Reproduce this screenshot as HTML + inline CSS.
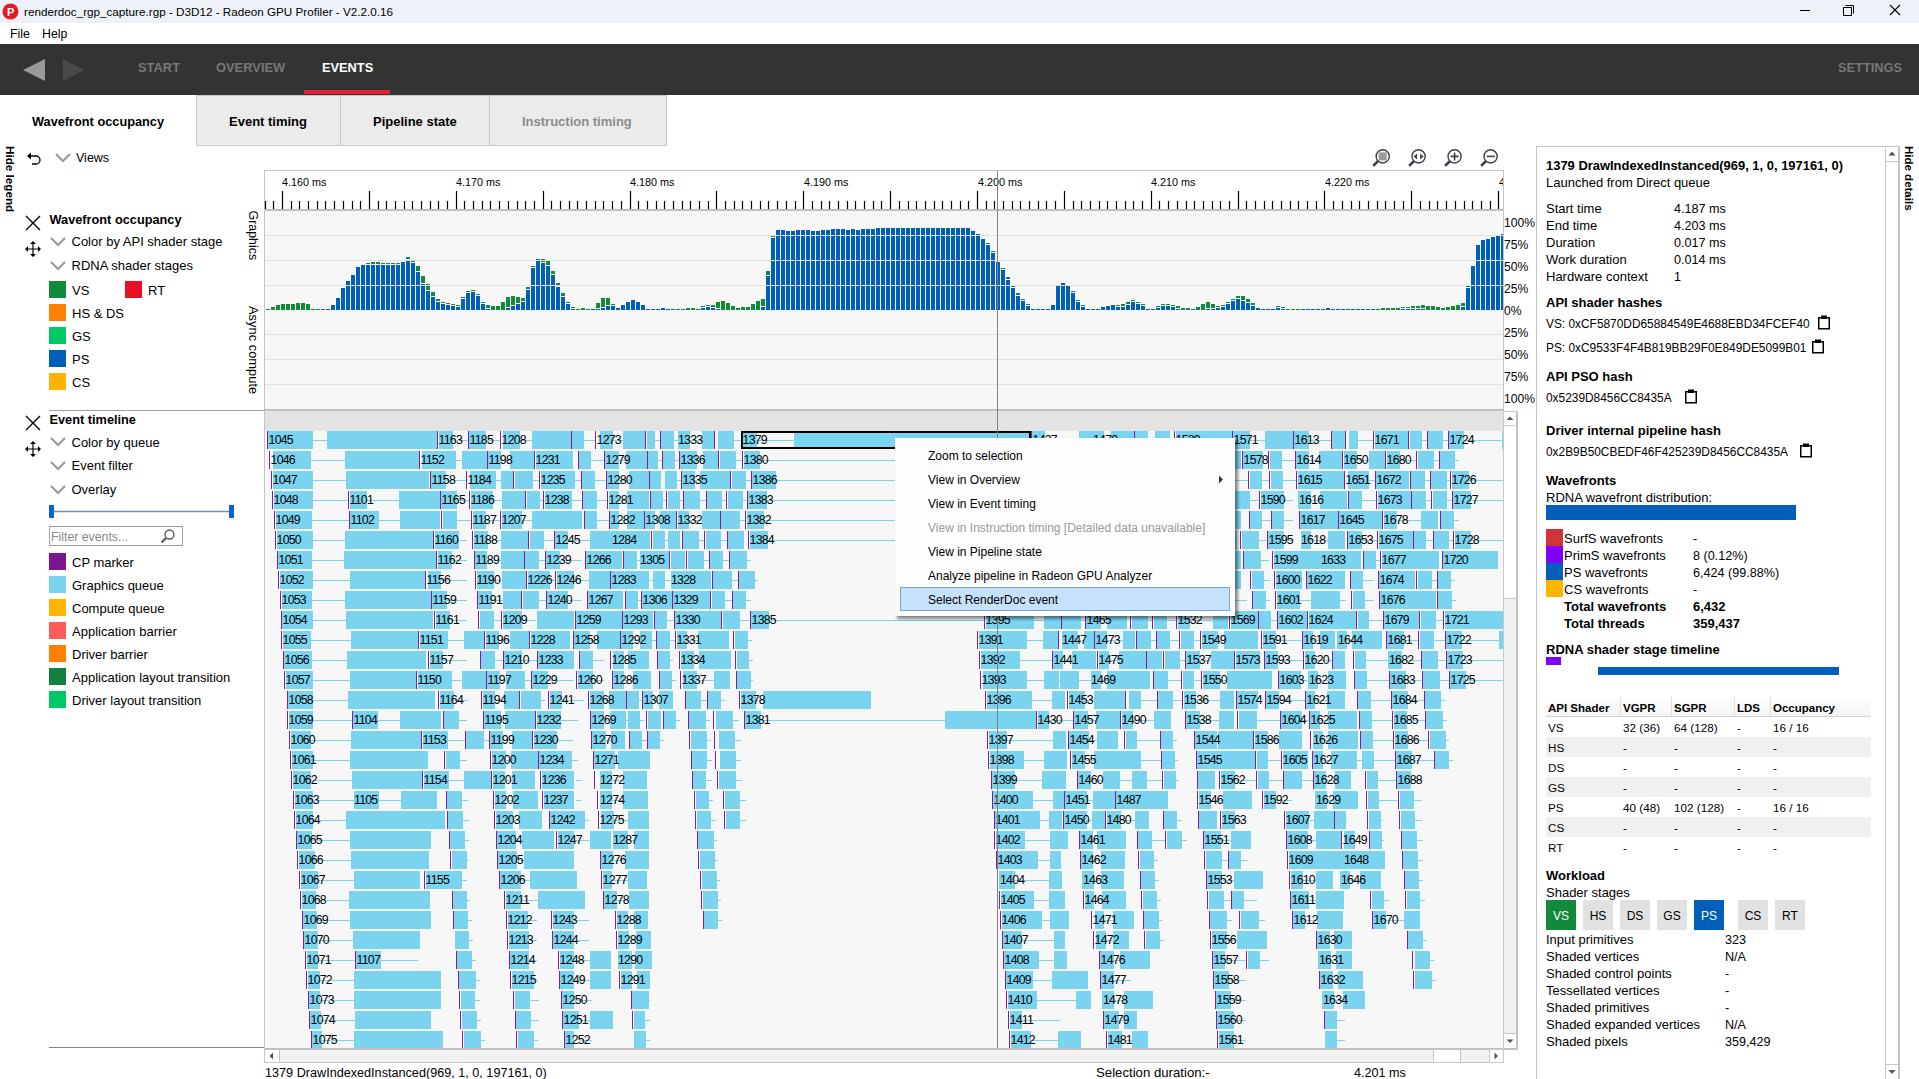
<!DOCTYPE html>
<html><head><meta charset="utf-8"><style>
html,body{margin:0;padding:0;background:#fff;overflow:hidden;width:1919px;height:1079px}
svg{display:block;font-family:"Liberation Sans", sans-serif}
</style></head><body>
<svg width="1919" height="1079" viewBox="0 0 1919 1079">
<rect x="0" y="0" width="1919" height="23" fill="#eef2f8" /><circle cx="10.5" cy="11.5" r="8" fill="#e31b23"/><text x="7" y="16" font-size="11" font-weight="bold" fill="#fff" >P</text><text x="24" y="16" font-size="11.7" font-weight="normal" fill="#000" >renderdoc_rgp_capture.rgp - D3D12 - Radeon GPU Profiler - V2.2.0.16</text><line x1="1800" y1="10.5" x2="1810" y2="10.5" stroke="#000" stroke-width="1" /><rect x="1843.5" y="7.5" width="8" height="8" fill="none" stroke="#000" stroke-width="1"/><path d="M1845.5 5.5 H1853.5 V13.5" fill="none" stroke="#000" stroke-width="1"/><path d="M1890 5 L1900 15 M1900 5 L1890 15" stroke="#000" stroke-width="1.1"/><rect x="0" y="23" width="1919" height="21" fill="#ffffff" /><text x="10" y="38" font-size="12.3" font-weight="normal" fill="#000" >File</text><text x="42" y="38" font-size="12.3" font-weight="normal" fill="#000" >Help</text><rect x="0" y="44" width="1919" height="51" fill="#333333" /><path d="M23 70 L45 59 L45 81 Z" fill="#9a9a9a"/><path d="M63 59 L84 70 L63 81 Z" fill="#4a4a4a"/><text x="138" y="71.5" font-size="12.9" font-weight="bold" fill="#777777" >START</text><text x="216" y="71.5" font-size="12.9" font-weight="bold" fill="#777777" >OVERVIEW</text><text x="322" y="71.5" font-size="12.8" font-weight="bold" fill="#ffffff" >EVENTS</text><text x="1838" y="71.5" font-size="12.8" font-weight="bold" fill="#777777" >SETTINGS</text><rect x="304" y="90" width="86" height="4" fill="#e3223a" /><rect x="196.5" y="95.5" width="470" height="50" fill="#ebebeb" stroke="#c8c8c8" stroke-width="1"/><line x1="340.5" y1="95" x2="340.5" y2="145" stroke="#c8c8c8" stroke-width="1" /><line x1="489.5" y1="95" x2="489.5" y2="145" stroke="#c8c8c8" stroke-width="1" /><text x="32" y="126" font-size="12.75" font-weight="bold" fill="#000" >Wavefront occupancy</text><text x="229" y="126" font-size="13" font-weight="bold" fill="#000" >Event timing</text><text x="373" y="126" font-size="13" font-weight="bold" fill="#000" >Pipeline state</text><text x="522" y="126" font-size="13" font-weight="bold" fill="#8c8c8c" >Instruction timing</text><text transform="translate(5.5,146) rotate(90)" font-size="11.7" font-weight="bold" fill="#000">Hide legend</text><path d="M29 156 H36 A4 4 0 0 1 36 164 H32" fill="none" stroke="#000" stroke-width="1.3"/><path d="M27 156 L31 152.5 V159.5 Z" fill="#000"/><path d="M56 154 L63 161 L70 154" fill="none" stroke="#9a9a9a" stroke-width="2.2"/><text x="76" y="162" font-size="12.5" font-weight="normal" fill="#000" >Views</text><path d="M26 216 L40 230 M40 216 L26 230" stroke="#000" stroke-width="1.4"/><path d="M27 249 H39 M33 243 V255" stroke="#000" stroke-width="1.2"/><path d="M25 249 L28 246 V252 Z M41 249 L38 246 V252 Z M33 241 L30 244 H36 Z M33 257 L30 254 H36 Z" fill="#000"/><text x="49.5" y="224" font-size="12.75" font-weight="bold" fill="#000" >Wavefront occupancy</text><path d="M51 238 L58 245 L65 238" fill="none" stroke="#9a9a9a" stroke-width="2.2"/><text x="71.5" y="246" font-size="13" font-weight="normal" fill="#000" >Color by API shader stage</text><path d="M51 262 L58 269 L65 262" fill="none" stroke="#9a9a9a" stroke-width="2.2"/><text x="71.5" y="270" font-size="13" font-weight="normal" fill="#000" >RDNA shader stages</text><rect x="49" y="281" width="17" height="17" fill="#128a3c" /><text x="72" y="294.5" font-size="13" font-weight="normal" fill="#000" >VS</text><rect x="49" y="304" width="17" height="17" fill="#ff8000" /><text x="72" y="317.5" font-size="13" font-weight="normal" fill="#000" >HS &amp; DS</text><rect x="49" y="327" width="17" height="17" fill="#00c864" /><text x="72" y="340.5" font-size="13" font-weight="normal" fill="#000" >GS</text><rect x="49" y="350" width="17" height="17" fill="#005fb8" /><text x="72" y="363.5" font-size="13" font-weight="normal" fill="#000" >PS</text><rect x="49" y="373" width="17" height="17" fill="#ffb400" /><text x="72" y="386.5" font-size="13" font-weight="normal" fill="#000" >CS</text><rect x="125" y="281" width="17" height="17" fill="#e81123" /><text x="148" y="294.5" font-size="13" font-weight="normal" fill="#000" >RT</text><line x1="49" y1="410.5" x2="265" y2="410.5" stroke="#a0a0a0" stroke-width="1" /><path d="M26 416 L40 430 M40 416 L26 430" stroke="#000" stroke-width="1.4"/><path d="M27 449 H39 M33 443 V455" stroke="#000" stroke-width="1.2"/><path d="M25 449 L28 446 V452 Z M41 449 L38 446 V452 Z M33 441 L30 444 H36 Z M33 457 L30 454 H36 Z" fill="#000"/><text x="49.5" y="424" font-size="12.75" font-weight="bold" fill="#000" >Event timeline</text><path d="M51 438 L58 445 L65 438" fill="none" stroke="#9a9a9a" stroke-width="2.2"/><text x="71.5" y="446.5" font-size="13" font-weight="normal" fill="#000" >Color by queue</text><path d="M51 462 L58 469 L65 462" fill="none" stroke="#9a9a9a" stroke-width="2.2"/><text x="71.5" y="470" font-size="13" font-weight="normal" fill="#000" >Event filter</text><path d="M51 486 L58 493 L65 486" fill="none" stroke="#9a9a9a" stroke-width="2.2"/><text x="71.5" y="494" font-size="13" font-weight="normal" fill="#000" >Overlay</text><line x1="50" y1="511.5" x2="233" y2="511.5" stroke="#6b8fb5" stroke-width="1.5" /><rect x="49" y="505" width="5" height="13" fill="#0a64d2" /><rect x="229" y="505" width="5" height="13" fill="#0a64d2" /><rect x="49.5" y="526.5" width="133" height="19" fill="#fff" stroke="#a0a0a0" stroke-width="1"/><text x="51" y="541" font-size="12.3" font-weight="normal" fill="#8a8a8a" >Filter events...</text><circle cx="169.5" cy="534.5" r="4.5" fill="none" stroke="#555" stroke-width="1.3"/><line x1="166" y1="538" x2="161.5" y2="542.5" stroke="#555" stroke-width="2" /><rect x="49" y="553" width="17" height="17" fill="#7b1690" /><text x="72" y="566.5" font-size="13" font-weight="normal" fill="#000" >CP marker</text><rect x="49" y="576" width="17" height="17" fill="#7ad4f0" /><text x="72" y="589.5" font-size="13" font-weight="normal" fill="#000" >Graphics queue</text><rect x="49" y="599" width="17" height="17" fill="#ffb400" /><text x="72" y="612.5" font-size="13" font-weight="normal" fill="#000" >Compute queue</text><rect x="49" y="622" width="17" height="17" fill="#ff5c5c" /><text x="72" y="635.5" font-size="13" font-weight="normal" fill="#000" >Application barrier</text><rect x="49" y="645" width="17" height="17" fill="#ff8000" /><text x="72" y="658.5" font-size="13" font-weight="normal" fill="#000" >Driver barrier</text><rect x="49" y="668" width="17" height="17" fill="#128040" /><text x="72" y="681.5" font-size="13" font-weight="normal" fill="#000" >Application layout transition</text><rect x="49" y="691" width="17" height="17" fill="#00c864" /><text x="72" y="704.5" font-size="13" font-weight="normal" fill="#000" >Driver layout transition</text><line x1="49" y1="1047.5" x2="265" y2="1047.5" stroke="#808080" stroke-width="1" /><circle cx="1382.7" cy="156.4" r="6.6" fill="#fff" stroke="#3c4048" stroke-width="1.4"/><path d="M1378.1000000000001 161.0 L1373.2 165.9" stroke="#3c4048" stroke-width="2.6"/><rect x="1378.7" y="152.4" width="8" height="8" fill="#9a9a9a"/><circle cx="1418.6" cy="156.4" r="6.6" fill="#fff" stroke="#3c4048" stroke-width="1.4"/><path d="M1414.0 161.0 L1409.1 165.9" stroke="#3c4048" stroke-width="2.6"/><path d="M1413.6 156.4 L1417.1 153.4 V159.4 Z M1423.6 156.4 L1420.1 153.4 V159.4 Z" fill="#3c4048"/><circle cx="1454.6" cy="156.4" r="6.6" fill="#fff" stroke="#3c4048" stroke-width="1.4"/><path d="M1450.0 161.0 L1445.1 165.9" stroke="#3c4048" stroke-width="2.6"/><path d="M1450.6 156.4 H1458.6 M1454.6 152.4 V160.4" stroke="#3c4048" stroke-width="1.6"/><circle cx="1490.6" cy="156.4" r="6.6" fill="#fff" stroke="#3c4048" stroke-width="1.4"/><path d="M1486.0 161.0 L1481.1 165.9" stroke="#3c4048" stroke-width="2.6"/><path d="M1486.6 156.4 H1494.6" stroke="#3c4048" stroke-width="1.6"/><rect x="264" y="170" width="1240" height="40" fill="#ffffff" /><line x1="264" y1="170.5" x2="1504" y2="170.5" stroke="#c4c4c4" stroke-width="1" /><line x1="264.5" y1="170" x2="264.5" y2="1049" stroke="#c4c4c4" stroke-width="1" /><line x1="1503.5" y1="170" x2="1503.5" y2="411" stroke="#c4c4c4" stroke-width="1" /><text x="282" y="186" font-size="10.8" font-weight="normal" fill="#000" >4.160 ms</text><text x="456" y="186" font-size="10.8" font-weight="normal" fill="#000" >4.170 ms</text><text x="630" y="186" font-size="10.8" font-weight="normal" fill="#000" >4.180 ms</text><text x="804" y="186" font-size="10.8" font-weight="normal" fill="#000" >4.190 ms</text><text x="978" y="186" font-size="10.8" font-weight="normal" fill="#000" >4.200 ms</text><text x="1151" y="186" font-size="10.8" font-weight="normal" fill="#000" >4.210 ms</text><text x="1325" y="186" font-size="10.8" font-weight="normal" fill="#000" >4.220 ms</text><svg x="264" y="170" width="1239" height="40" overflow="hidden"><text x="1235" y="16" font-size="10.8" font-weight="normal" fill="#000" >4.230 ms</text></svg><path d="M265.5 201V209M273.5 201V209M282.5 191V209M291.5 201V209M299.5 201V209M308.5 201V209M317.5 201V209M325.5 201V209M334.5 201V209M343.5 201V209M352.5 201V209M360.5 201V209M369.5 191V209M378.5 201V209M386.5 201V209M395.5 201V209M404.5 201V209M412.5 201V209M421.5 201V209M430.5 201V209M438.5 201V209M447.5 201V209M456.5 191V209M464.5 201V209M473.5 201V209M482.5 201V209M490.5 201V209M499.5 201V209M508.5 201V209M517.5 201V209M525.5 201V209M534.5 201V209M543.5 191V209M551.5 201V209M560.5 201V209M569.5 201V209M577.5 201V209M586.5 201V209M595.5 201V209M603.5 201V209M612.5 201V209M621.5 201V209M630.5 191V209M638.5 201V209M647.5 201V209M656.5 201V209M664.5 201V209M673.5 201V209M682.5 201V209M690.5 201V209M699.5 201V209M708.5 201V209M716.5 191V209M725.5 201V209M734.5 201V209M742.5 201V209M751.5 201V209M760.5 201V209M768.5 201V209M777.5 201V209M786.5 201V209M795.5 201V209M803.5 191V209M812.5 201V209M821.5 201V209M829.5 201V209M838.5 201V209M847.5 201V209M855.5 201V209M864.5 201V209M873.5 201V209M881.5 201V209M890.5 191V209M899.5 201V209M908.5 201V209M916.5 201V209M925.5 201V209M934.5 201V209M942.5 201V209M951.5 201V209M960.5 201V209M968.5 201V209M977.5 191V209M986.5 201V209M994.5 201V209M1003.5 201V209M1012.5 201V209M1020.5 201V209M1029.5 201V209M1038.5 201V209M1046.5 201V209M1055.5 201V209M1064.5 191V209M1073.5 201V209M1081.5 201V209M1090.5 201V209M1099.5 201V209M1107.5 201V209M1116.5 201V209M1125.5 201V209M1133.5 201V209M1142.5 201V209M1151.5 191V209M1159.5 201V209M1168.5 201V209M1177.5 201V209M1186.5 201V209M1194.5 201V209M1203.5 201V209M1212.5 201V209M1220.5 201V209M1229.5 201V209M1238.5 191V209M1246.5 201V209M1255.5 201V209M1264.5 201V209M1272.5 201V209M1281.5 201V209M1290.5 201V209M1298.5 201V209M1307.5 201V209M1316.5 201V209M1324.5 191V209M1333.5 201V209M1342.5 201V209M1351.5 201V209M1359.5 201V209M1368.5 201V209M1377.5 201V209M1385.5 201V209M1394.5 201V209M1403.5 201V209M1411.5 191V209M1420.5 201V209M1429.5 201V209M1437.5 201V209M1446.5 201V209M1455.5 201V209M1464.5 201V209M1472.5 201V209M1481.5 201V209M1490.5 201V209M1498.5 191V209" stroke="#000" stroke-width="1.2"/><rect x="265" y="209" width="1238" height="2" fill="#c0c0c0" /><rect x="265" y="211" width="1238" height="198" fill="#f7f7f7" /><path d="M326 309h4v1h-4zM331 305h4v5h-4zM336 298h4v12h-4zM341 288h4v22h-4zM346 281h4v29h-4zM351 275h4v35h-4zM356 267h4v43h-4zM361 265h4v45h-4zM366 265h4v45h-4zM371 265h4v45h-4zM376 265h4v45h-4zM381 265h4v45h-4zM386 265h4v45h-4zM391 265h4v45h-4zM396 265h4v45h-4zM401 262h4v48h-4zM406 260h4v50h-4zM411 263h4v47h-4zM416 272h4v38h-4zM421 284h4v26h-4zM426 291h4v19h-4zM431 297h4v13h-4zM436 302h4v8h-4zM441 304h4v6h-4zM446 305h4v5h-4zM451 306h4v4h-4zM456 307h4v3h-4zM461 299h4v11h-4zM466 293h4v17h-4zM471 292h4v18h-4zM476 296h4v14h-4zM481 304h4v6h-4zM486 309h4v1h-4zM506 308h4v2h-4zM511 306h4v4h-4zM516 304h4v6h-4zM521 302h4v8h-4zM526 290h4v20h-4zM531 268h4v42h-4zM536 261h4v49h-4zM541 263h4v47h-4zM546 266h4v44h-4zM551 275h4v35h-4zM556 287h4v23h-4zM561 297h4v13h-4zM566 304h4v6h-4zM571 309h4v1h-4zM591 309h4v1h-4zM596 309h4v1h-4zM601 308h4v2h-4zM606 306h4v4h-4zM611 306h4v4h-4zM616 308h4v2h-4zM621 305h4v5h-4zM626 302h4v8h-4zM631 300h4v10h-4zM636 302h4v8h-4zM641 305h4v5h-4zM646 309h4v1h-4zM651 309h4v1h-4zM656 309h4v1h-4zM661 308h4v2h-4zM666 309h4v1h-4zM701 308h4v2h-4zM706 307h4v3h-4zM711 308h4v2h-4zM716 309h4v1h-4zM761 307h4v3h-4zM766 276h4v34h-4zM771 238h4v72h-4zM776 230h4v80h-4zM781 230h4v80h-4zM786 231h4v79h-4zM791 231h4v79h-4zM796 230h4v80h-4zM801 230h4v80h-4zM806 230h4v80h-4zM811 231h4v79h-4zM816 231h4v79h-4zM821 230h4v80h-4zM826 230h4v80h-4zM831 229h4v81h-4zM836 229h4v81h-4zM841 229h4v81h-4zM846 230h4v80h-4zM851 229h4v81h-4zM856 230h4v80h-4zM861 229h4v81h-4zM866 229h4v81h-4zM871 229h4v81h-4zM876 228h4v82h-4zM881 228h4v82h-4zM886 228h4v82h-4zM891 228h4v82h-4zM896 228h4v82h-4zM901 228h4v82h-4zM906 228h4v82h-4zM911 228h4v82h-4zM916 228h4v82h-4zM921 228h4v82h-4zM926 228h4v82h-4zM931 228h4v82h-4zM936 228h4v82h-4zM941 228h4v82h-4zM946 228h4v82h-4zM951 228h4v82h-4zM956 228h4v82h-4zM961 228h4v82h-4zM966 228h4v82h-4zM971 231h4v79h-4zM976 234h4v76h-4zM981 239h4v71h-4zM986 245h4v65h-4zM991 253h4v57h-4zM996 262h4v48h-4zM1001 270h4v40h-4zM1006 280h4v30h-4zM1011 288h4v22h-4zM1016 296h4v14h-4zM1021 301h4v9h-4zM1026 306h4v4h-4zM1031 309h4v1h-4zM1036 309h4v1h-4zM1041 309h4v1h-4zM1046 309h4v1h-4zM1051 305h4v5h-4zM1056 286h4v24h-4zM1061 283h4v27h-4zM1066 286h4v24h-4zM1071 293h4v17h-4zM1076 302h4v8h-4zM1081 307h4v3h-4zM1086 309h4v1h-4zM1091 309h4v1h-4zM1096 309h4v1h-4zM1101 307h4v3h-4zM1106 306h4v4h-4zM1111 305h4v5h-4zM1116 307h4v3h-4zM1121 307h4v3h-4zM1126 305h4v5h-4zM1131 302h4v8h-4zM1136 304h4v6h-4zM1141 306h4v4h-4zM1146 309h4v1h-4zM1151 309h4v1h-4zM1156 308h4v2h-4zM1161 306h4v4h-4zM1166 306h4v4h-4zM1171 307h4v3h-4zM1176 309h4v1h-4zM1206 309h4v1h-4zM1211 309h4v1h-4zM1216 308h4v2h-4zM1221 307h4v3h-4zM1226 304h4v6h-4zM1231 301h4v9h-4zM1236 299h4v11h-4zM1241 301h4v9h-4zM1246 303h4v7h-4zM1251 306h4v4h-4zM1256 308h4v2h-4zM1261 309h4v1h-4zM1266 309h4v1h-4zM1271 309h4v1h-4zM1276 308h4v2h-4zM1281 309h4v1h-4zM1301 309h4v1h-4zM1306 309h4v1h-4zM1311 309h4v1h-4zM1316 309h4v1h-4zM1321 309h4v1h-4zM1326 308h4v2h-4zM1331 309h4v1h-4zM1336 309h4v1h-4zM1341 309h4v1h-4zM1346 309h4v1h-4zM1351 309h4v1h-4zM1356 309h4v1h-4zM1361 309h4v1h-4zM1366 309h4v1h-4zM1371 309h4v1h-4zM1401 309h4v1h-4zM1406 309h4v1h-4zM1411 309h4v1h-4zM1416 309h4v1h-4zM1421 309h4v1h-4zM1461 307h4v3h-4zM1466 288h4v22h-4zM1471 266h4v44h-4zM1476 245h4v65h-4zM1481 240h4v70h-4zM1486 239h4v71h-4zM1491 237h4v73h-4zM1496 236h4v74h-4zM1501 234h2v76h-2z" fill="#005fb8"/><path d="M266 309h4v1h-4zM271 307h4v3h-4zM276 305h4v5h-4zM281 304h4v6h-4zM286 304h4v6h-4zM291 304h4v6h-4zM296 303h4v7h-4zM301 303h4v7h-4zM306 304h4v6h-4zM311 309h4v1h-4zM316 309h4v1h-4zM321 309h4v1h-4zM366 263h4v1h-4zM371 262h4v2h-4zM376 262h4v2h-4zM381 263h4v1h-4zM386 263h4v1h-4zM391 263h4v1h-4zM396 263h4v1h-4zM406 257h4v2h-4zM411 261h4v1h-4zM416 266h4v5h-4zM421 276h4v7h-4zM426 284h4v6h-4zM431 292h4v4h-4zM436 299h4v2h-4zM441 302h4v1h-4zM446 303h4v1h-4zM451 304h4v1h-4zM456 305h4v1h-4zM461 297h4v1h-4zM466 291h4v1h-4zM471 290h4v1h-4zM476 294h4v1h-4zM481 302h4v1h-4zM486 305h4v3h-4zM491 306h4v4h-4zM496 306h4v4h-4zM501 302h4v8h-4zM506 297h4v10h-4zM511 296h4v9h-4zM516 297h4v6h-4zM521 298h4v3h-4zM526 287h4v2h-4zM531 266h4v1h-4zM536 259h4v1h-4zM541 259h4v3h-4zM546 261h4v4h-4zM551 271h4v3h-4zM556 283h4v3h-4zM561 293h4v3h-4zM566 302h4v1h-4zM571 307h4v1h-4zM576 309h4v1h-4zM581 308h4v2h-4zM586 309h4v1h-4zM596 303h4v5h-4zM601 298h4v9h-4zM606 298h4v7h-4zM611 304h4v1h-4zM671 309h4v1h-4zM676 309h4v1h-4zM681 309h4v1h-4zM686 308h4v2h-4zM691 308h4v2h-4zM696 309h4v1h-4zM701 306h4v1h-4zM706 305h4v1h-4zM711 305h4v2h-4zM716 302h4v6h-4zM721 301h4v9h-4zM726 303h4v7h-4zM731 306h4v4h-4zM736 308h4v2h-4zM741 307h4v3h-4zM746 307h4v3h-4zM751 304h4v6h-4zM756 301h4v9h-4zM761 299h4v7h-4zM766 271h4v4h-4zM771 236h4v1h-4zM986 243h4v1h-4zM991 251h4v1h-4zM1001 268h4v1h-4zM1006 277h4v2h-4zM1011 286h4v1h-4zM1016 293h4v2h-4zM1021 299h4v1h-4zM1026 304h4v1h-4zM1071 291h4v1h-4zM1076 300h4v1h-4zM1081 305h4v1h-4zM1116 305h4v1h-4zM1121 304h4v2h-4zM1126 302h4v2h-4zM1131 300h4v1h-4zM1136 302h4v1h-4zM1141 304h4v1h-4zM1156 306h4v1h-4zM1161 304h4v1h-4zM1166 304h4v1h-4zM1171 305h4v1h-4zM1176 306h4v2h-4zM1181 308h4v2h-4zM1186 308h4v2h-4zM1191 309h4v1h-4zM1196 307h4v3h-4zM1201 304h4v6h-4zM1206 302h4v6h-4zM1211 304h4v4h-4zM1216 306h4v1h-4zM1221 305h4v1h-4zM1226 302h4v1h-4zM1231 299h4v1h-4zM1236 296h4v2h-4zM1241 296h4v4h-4zM1246 299h4v3h-4zM1251 303h4v2h-4zM1276 306h4v1h-4zM1281 307h4v1h-4zM1286 309h4v1h-4zM1291 309h4v1h-4zM1296 309h4v1h-4zM1376 309h4v1h-4zM1381 308h4v2h-4zM1386 308h4v2h-4zM1391 308h4v2h-4zM1396 308h4v2h-4zM1401 307h4v1h-4zM1406 307h4v1h-4zM1411 306h4v2h-4zM1416 306h4v2h-4zM1421 305h4v3h-4zM1426 306h4v4h-4zM1431 306h4v4h-4zM1436 307h4v3h-4zM1441 308h4v2h-4zM1446 307h4v3h-4zM1451 306h4v4h-4zM1456 305h4v5h-4zM1461 303h4v3h-4zM1466 286h4v1h-4z" fill="#128a3c"/><line x1="265" y1="235.5" x2="1503" y2="235.5" stroke="#e2e2e2" stroke-width="1" /><line x1="265" y1="260.5" x2="1503" y2="260.5" stroke="#e2e2e2" stroke-width="1" /><line x1="265" y1="285.5" x2="1503" y2="285.5" stroke="#e2e2e2" stroke-width="1" /><line x1="265" y1="334.5" x2="1503" y2="334.5" stroke="#e2e2e2" stroke-width="1" /><line x1="265" y1="359.5" x2="1503" y2="359.5" stroke="#e2e2e2" stroke-width="1" /><line x1="265" y1="384.5" x2="1503" y2="384.5" stroke="#e2e2e2" stroke-width="1" /><text x="1504" y="227" font-size="12.1" font-weight="normal" fill="#000" >100%</text><text x="1504" y="249" font-size="12.1" font-weight="normal" fill="#000" >75%</text><text x="1504" y="271" font-size="12.1" font-weight="normal" fill="#000" >50%</text><text x="1504" y="293" font-size="12.1" font-weight="normal" fill="#000" >25%</text><text x="1504" y="315" font-size="12.1" font-weight="normal" fill="#000" >0%</text><text x="1504" y="337" font-size="12.1" font-weight="normal" fill="#000" >25%</text><text x="1504" y="359" font-size="12.1" font-weight="normal" fill="#000" >50%</text><text x="1504" y="381" font-size="12.1" font-weight="normal" fill="#000" >75%</text><text x="1504" y="403" font-size="12.1" font-weight="normal" fill="#000" >100%</text><text transform="translate(248.5,210.5) rotate(90)" font-size="12.4" fill="#000">Graphics</text><text transform="translate(248.5,306) rotate(90)" font-size="12.9" fill="#000">Async compute</text><rect x="265" y="409" width="1238" height="2" fill="#c0c0c0" /><rect x="265" y="411" width="1238" height="637" fill="#f7f7f7" /><rect x="265" y="411" width="1238" height="20" fill="#e3e3e3" /><svg x="265" y="431" width="1238" height="617" viewBox="265 431 1238 617" overflow="hidden"><path d="M313.0 440h14.0v1h-14.0zM453.0 440h15.0v1h-15.0zM486.0 440h14.0v1h-14.0zM520.0 440h12.0v1h-12.0zM584.0 440h11.0v1h-11.0zM613.0 440h10.0v1h-10.0zM655.0 440h5.0v1h-5.0zM674.0 440h4.0v1h-4.0zM690.0 440h12.0v1h-12.0zM734.0 440h8.0v1h-8.0zM757.0 440h37.0v1h-37.0zM1045.0 440h34.0v1h-34.0zM1104.0 440h7.0v1h-7.0zM1148.0 440h7.0v1h-7.0zM1170.0 440h4.0v1h-4.0zM1250.0 440h15.0v1h-15.0zM1309.0 440h22.0v1h-22.0zM1358.0 440h15.0v1h-15.0zM1422.0 440h5.0v1h-5.0zM1443.0 440h5.0v1h-5.0zM1464.0 440h38.0v1h-38.0zM311.0 460h34.0v1h-34.0zM456.0 460h6.0v1h-6.0zM501.0 460h9.0v1h-9.0zM591.0 460h13.0v1h-13.0zM619.0 460h7.0v1h-7.0zM658.0 460h4.0v1h-4.0zM675.0 460h4.0v1h-4.0zM697.0 460h6.0v1h-6.0zM736.0 460h6.0v1h-6.0zM760.0 460h135.0v1h-135.0zM1282.0 460h13.0v1h-13.0zM1309.0 460h10.0v1h-10.0zM1357.0 460h12.0v1h-12.0zM1400.0 460h16.0v1h-16.0zM1434.0 460h5.0v1h-5.0zM1455.0 460h4.0v1h-4.0zM313.0 480h33.0v1h-33.0zM446.0 480h20.0v1h-20.0zM496.0 480h5.0v1h-5.0zM533.0 480h6.0v1h-6.0zM575.0 480h6.0v1h-6.0zM595.0 480h11.0v1h-11.0zM619.0 480h10.0v1h-10.0zM677.0 480h4.0v1h-4.0zM695.0 480h5.0v1h-5.0zM746.0 480h5.0v1h-5.0zM776.0 480h119.0v1h-119.0zM1235.0 480h13.0v1h-13.0zM1262.0 480h7.0v1h-7.0zM1283.0 480h13.0v1h-13.0zM1369.0 480h6.0v1h-6.0zM1425.0 480h5.0v1h-5.0zM1447.0 480h3.0v1h-3.0zM1469.0 480h34.0v1h-34.0zM313.0 500h36.0v1h-36.0zM367.0 500h32.0v1h-32.0zM457.0 500h12.0v1h-12.0zM493.0 500h9.0v1h-9.0zM540.0 500h3.0v1h-3.0zM572.0 500h10.0v1h-10.0zM597.0 500h10.0v1h-10.0zM619.0 500h8.0v1h-8.0zM663.0 500h3.0v1h-3.0zM680.0 500h3.0v1h-3.0zM700.0 500h6.0v1h-6.0zM722.0 500h4.0v1h-4.0zM743.0 500h4.0v1h-4.0zM767.0 500h128.0v1h-128.0zM1250.0 500h9.0v1h-9.0zM1284.0 500h9.0v1h-9.0zM1311.0 500h9.0v1h-9.0zM1362.0 500h14.0v1h-14.0zM1426.0 500h5.0v1h-5.0zM1447.0 500h5.0v1h-5.0zM1471.0 500h32.0v1h-32.0zM312.0 520h37.0v1h-37.0zM379.0 520h21.0v1h-21.0zM457.0 520h15.0v1h-15.0zM486.0 520h14.0v1h-14.0zM522.0 520h10.0v1h-10.0zM597.0 520h12.0v1h-12.0zM619.0 520h8.0v1h-8.0zM655.0 520h5.0v1h-5.0zM689.0 520h13.0v1h-13.0zM740.0 520h5.0v1h-5.0zM764.0 520h131.0v1h-131.0zM1262.0 520h9.0v1h-9.0zM1284.0 520h9.0v1h-9.0zM1397.0 520h24.0v1h-24.0zM1454.0 520h5.0v1h-5.0zM313.0 540h32.0v1h-32.0zM459.0 540h8.0v1h-8.0zM488.0 540h13.0v1h-13.0zM544.0 540h10.0v1h-10.0zM568.0 540h22.0v1h-22.0zM665.0 540h3.0v1h-3.0zM699.0 540h5.0v1h-5.0zM721.0 540h6.0v1h-6.0zM768.0 540h127.0v1h-127.0zM1259.0 540h8.0v1h-8.0zM1284.0 540h9.0v1h-9.0zM1311.0 540h17.0v1h-17.0zM1362.0 540h15.0v1h-15.0zM1426.0 540h7.0v1h-7.0zM1449.0 540h4.0v1h-4.0zM1471.0 540h32.0v1h-32.0zM312.0 560h32.0v1h-32.0zM452.0 560h15.0v1h-15.0zM487.0 560h14.0v1h-14.0zM539.0 560h6.0v1h-6.0zM560.0 560h11.0v1h-11.0zM571.0 560h11.0v1h-11.0zM637.0 560h3.0v1h-3.0zM704.0 560h5.0v1h-5.0zM723.0 560h6.0v1h-6.0zM747.0 560h4.0v1h-4.0zM1261.0 560h8.0v1h-8.0zM1376.0 560h4.0v1h-4.0zM313.0 580h37.0v1h-37.0zM441.0 580h26.0v1h-26.0zM494.0 580h8.0v1h-8.0zM550.0 580h5.0v1h-5.0zM574.0 580h15.0v1h-15.0zM649.0 580h4.0v1h-4.0zM665.0 580h6.0v1h-6.0zM732.0 580h6.0v1h-6.0zM755.0 580h3.0v1h-3.0zM1264.0 580h6.0v1h-6.0zM1363.0 580h11.0v1h-11.0zM1432.0 580h5.0v1h-5.0zM1451.0 580h4.0v1h-4.0zM312.0 600h33.0v1h-33.0zM447.0 600h20.0v1h-20.0zM492.0 600h11.0v1h-11.0zM539.0 600h7.0v1h-7.0zM568.0 600h6.0v1h-6.0zM571.0 600h11.0v1h-11.0zM638.0 600h3.0v1h-3.0zM725.0 600h7.0v1h-7.0zM746.0 600h5.0v1h-5.0zM1235.0 600h12.0v1h-12.0zM1266.0 600h4.0v1h-4.0zM1300.0 600h11.0v1h-11.0zM1340.0 600h6.0v1h-6.0zM1365.0 600h9.0v1h-9.0zM1452.0 600h4.0v1h-4.0zM313.0 620h33.0v1h-33.0zM450.0 620h17.0v1h-17.0zM494.0 620h7.0v1h-7.0zM522.0 620h14.0v1h-14.0zM667.0 620h7.0v1h-7.0zM740.0 620h10.0v1h-10.0zM769.0 620h126.0v1h-126.0zM895.0 620h89.0v1h-89.0zM1034.0 620h10.0v1h-10.0zM1081.0 620h4.0v1h-4.0zM1101.0 620h6.0v1h-6.0zM1148.0 620h4.0v1h-4.0zM1167.0 620h9.0v1h-9.0zM1190.0 620h23.0v1h-23.0zM1271.0 620h6.0v1h-6.0zM1369.0 620h14.0v1h-14.0zM1436.0 620h7.0v1h-7.0zM311.0 640h40.0v1h-40.0zM448.0 640h16.0v1h-16.0zM499.0 640h11.0v1h-11.0zM590.0 640h7.0v1h-7.0zM633.0 640h7.0v1h-7.0zM652.0 640h4.0v1h-4.0zM670.0 640h5.0v1h-5.0zM687.0 640h11.0v1h-11.0zM748.0 640h4.0v1h-4.0zM1027.0 640h16.0v1h-16.0zM1078.0 640h6.0v1h-6.0zM1107.0 640h16.0v1h-16.0zM1151.0 640h5.0v1h-5.0zM1170.0 640h9.0v1h-9.0zM1193.0 640h7.0v1h-7.0zM1218.0 640h6.0v1h-6.0zM1276.0 640h26.0v1h-26.0zM1313.0 640h7.0v1h-7.0zM1347.0 640h5.0v1h-5.0zM1404.0 640h14.0v1h-14.0zM1434.0 640h11.0v1h-11.0zM1462.0 640h37.0v1h-37.0zM312.0 660h35.0v1h-35.0zM443.0 660h24.0v1h-24.0zM495.0 660h8.0v1h-8.0zM522.0 660h15.0v1h-15.0zM593.0 660h11.0v1h-11.0zM624.0 660h4.0v1h-4.0zM670.0 660h3.0v1h-3.0zM694.0 660h5.0v1h-5.0zM749.0 660h4.0v1h-4.0zM1020.0 660h32.0v1h-32.0zM1063.0 660h9.0v1h-9.0zM1109.0 660h10.0v1h-10.0zM1180.0 660h14.0v1h-14.0zM1200.0 660h11.0v1h-11.0zM1278.0 660h25.0v1h-25.0zM1315.0 660h17.0v1h-17.0zM1366.0 660h22.0v1h-22.0zM1402.0 660h19.0v1h-19.0zM1438.0 660h8.0v1h-8.0zM1463.0 660h40.0v1h-40.0zM313.0 680h37.0v1h-37.0zM452.0 680h10.0v1h-10.0zM500.0 680h6.0v1h-6.0zM525.0 680h6.0v1h-6.0zM548.0 680h26.0v1h-26.0zM593.0 680h11.0v1h-11.0zM624.0 680h9.0v1h-9.0zM672.0 680h4.0v1h-4.0zM697.0 680h17.0v1h-17.0zM751.0 680h2.0v1h-2.0zM1027.0 680h17.0v1h-17.0zM1059.0 680h1.0v1h-1.0zM1079.0 680h12.0v1h-12.0zM1101.0 680h6.0v1h-6.0zM1168.0 680h13.0v1h-13.0zM1194.0 680h7.0v1h-7.0zM1220.0 680h7.0v1h-7.0zM1301.0 680h7.0v1h-7.0zM1318.0 680h10.0v1h-10.0zM1367.0 680h22.0v1h-22.0zM1406.0 680h16.0v1h-16.0zM1440.0 680h9.0v1h-9.0zM1466.0 680h37.0v1h-37.0zM313.0 700h35.0v1h-35.0zM454.0 700h14.0v1h-14.0zM495.0 700h9.0v1h-9.0zM541.0 700h4.0v1h-4.0zM562.0 700h12.0v1h-12.0zM574.0 700h10.0v1h-10.0zM604.0 700h5.0v1h-5.0zM639.0 700h3.0v1h-3.0zM653.0 700h6.0v1h-6.0zM701.0 700h6.0v1h-6.0zM721.0 700h4.0v1h-4.0zM756.0 700h7.0v1h-7.0zM1032.0 700h20.0v1h-20.0zM1085.0 700h9.0v1h-9.0zM1141.0 700h16.0v1h-16.0zM1173.0 700h9.0v1h-9.0zM1196.0 700h24.0v1h-24.0zM1279.0 700h26.0v1h-26.0zM1315.0 700h12.0v1h-12.0zM1371.0 700h20.0v1h-20.0zM1408.0 700h16.0v1h-16.0zM1441.0 700h4.0v1h-4.0zM313.0 720h39.0v1h-39.0zM378.0 720h22.0v1h-22.0zM459.0 720h8.0v1h-8.0zM501.0 720h4.0v1h-4.0zM561.0 720h13.0v1h-13.0zM574.0 720h4.0v1h-4.0zM604.0 720h6.0v1h-6.0zM626.0 720h2.0v1h-2.0zM640.0 720h4.0v1h-4.0zM676.0 720h4.0v1h-4.0zM706.0 720h4.0v1h-4.0zM733.0 720h6.0v1h-6.0zM761.0 720h134.0v1h-134.0zM895.0 720h50.0v1h-50.0zM1049.0 720h24.0v1h-24.0zM1088.0 720h8.0v1h-8.0zM1133.0 720h21.0v1h-21.0zM1200.0 720h19.0v1h-19.0zM1257.0 720h23.0v1h-23.0zM1302.0 720h7.0v1h-7.0zM1320.0 720h8.0v1h-8.0zM1372.0 720h20.0v1h-20.0zM1407.0 720h18.0v1h-18.0zM1443.0 720h4.0v1h-4.0zM311.0 740h40.0v1h-40.0zM448.0 740h17.0v1h-17.0zM484.0 740h5.0v1h-5.0zM503.0 740h9.0v1h-9.0zM557.0 740h17.0v1h-17.0zM574.0 740h-1.0v1h1.0zM606.0 740h5.0v1h-5.0zM642.0 740h5.0v1h-5.0zM660.0 740h4.0v1h-4.0zM707.0 740h4.0v1h-4.0zM735.0 740h6.0v1h-6.0zM1007.0 740h46.0v1h-46.0zM1089.0 740h8.0v1h-8.0zM1137.0 740h23.0v1h-23.0zM1173.0 740h4.0v1h-4.0zM1217.0 740h1.0v1h-1.0zM1268.0 740h11.0v1h-11.0zM1323.0 740h5.0v1h-5.0zM1373.0 740h20.0v1h-20.0zM1408.0 740h20.0v1h-20.0zM1446.0 740h3.0v1h-3.0zM313.0 760h37.0v1h-37.0zM460.0 760h7.0v1h-7.0zM506.0 760h5.0v1h-5.0zM572.0 760h6.0v1h-6.0zM615.0 760h3.0v1h-3.0zM707.0 760h5.0v1h-5.0zM736.0 760h5.0v1h-5.0zM1024.0 760h20.0v1h-20.0zM1085.0 760h9.0v1h-9.0zM1141.0 760h20.0v1h-20.0zM1175.0 760h3.0v1h-3.0zM1268.0 760h13.0v1h-13.0zM1323.0 760h8.0v1h-8.0zM1357.0 760h5.0v1h-5.0zM1374.0 760h21.0v1h-21.0zM1412.0 760h22.0v1h-22.0zM1449.0 760h4.0v1h-4.0zM311.0 780h41.0v1h-41.0zM449.0 780h15.0v1h-15.0zM505.0 780h7.0v1h-7.0zM576.0 780h6.0v1h-6.0zM612.0 780h11.0v1h-11.0zM706.0 780h6.0v1h-6.0zM736.0 780h6.0v1h-6.0zM1015.0 780h27.0v1h-27.0zM1091.0 780h12.0v1h-12.0zM1120.0 780h12.0v1h-12.0zM1147.0 780h15.0v1h-15.0zM1176.0 780h3.0v1h-3.0zM1235.0 780h21.0v1h-21.0zM1269.0 780h14.0v1h-14.0zM1302.0 780h11.0v1h-11.0zM1326.0 780h9.0v1h-9.0zM1378.0 780h18.0v1h-18.0zM1411.0 780h11.0v1h-11.0zM313.0 800h41.0v1h-41.0zM379.0 800h22.0v1h-22.0zM462.0 800h6.0v1h-6.0zM506.0 800h7.0v1h-7.0zM576.0 800h6.0v1h-6.0zM612.0 800h11.0v1h-11.0zM709.0 800h4.0v1h-4.0zM740.0 800h6.0v1h-6.0zM1033.0 800h20.0v1h-20.0zM1087.0 800h6.0v1h-6.0zM1211.0 800h12.0v1h-12.0zM1276.0 800h16.0v1h-16.0zM1327.0 800h6.0v1h-6.0zM1379.0 800h19.0v1h-19.0zM1414.0 800h8.0v1h-8.0zM313.0 820h33.0v1h-33.0zM463.0 820h6.0v1h-6.0zM513.0 820h6.0v1h-6.0zM585.0 820h4.0v1h-4.0zM614.0 820h14.0v1h-14.0zM711.0 820h5.0v1h-5.0zM740.0 820h6.0v1h-6.0zM1040.0 820h9.0v1h-9.0zM1087.0 820h5.0v1h-5.0zM1121.0 820h14.0v1h-14.0zM1177.0 820h5.0v1h-5.0zM1235.0 820h12.0v1h-12.0zM1309.0 820h5.0v1h-5.0zM1346.0 820h1.0v1h-1.0zM1381.0 820h2.0v1h-2.0zM1415.0 820h7.0v1h-7.0zM312.0 840h38.0v1h-38.0zM465.0 840h4.0v1h-4.0zM516.0 840h6.0v1h-6.0zM570.0 840h20.0v1h-20.0zM628.0 840h6.0v1h-6.0zM714.0 840h3.0v1h-3.0zM1025.0 840h25.0v1h-25.0zM1093.0 840h4.0v1h-4.0zM1152.0 840h13.0v1h-13.0zM1182.0 840h5.0v1h-5.0zM1221.0 840h10.0v1h-10.0zM1308.0 840h8.0v1h-8.0zM1382.0 840h2.0v1h-2.0zM1417.0 840h6.0v1h-6.0zM315.0 860h36.0v1h-36.0zM467.0 860h2.0v1h-2.0zM517.0 860h7.0v1h-7.0zM613.0 860h12.0v1h-12.0zM715.0 860h3.0v1h-3.0zM1038.0 860h12.0v1h-12.0zM1093.0 860h8.0v1h-8.0zM1154.0 860h4.0v1h-4.0zM1222.0 860h6.0v1h-6.0zM1241.0 860h7.0v1h-7.0zM1418.0 860h5.0v1h-5.0zM318.0 880h36.0v1h-36.0zM462.0 880h5.0v1h-5.0zM521.0 880h9.0v1h-9.0zM612.0 880h16.0v1h-16.0zM717.0 880h3.0v1h-3.0zM1015.0 880h34.0v1h-34.0zM1094.0 880h7.0v1h-7.0zM1155.0 880h4.0v1h-4.0zM1222.0 880h12.0v1h-12.0zM1303.0 880h13.0v1h-13.0zM1350.0 880h10.0v1h-10.0zM1419.0 880h4.0v1h-4.0zM316.0 900h33.0v1h-33.0zM467.0 900h3.0v1h-3.0zM521.0 900h17.0v1h-17.0zM617.0 900h12.0v1h-12.0zM718.0 900h3.0v1h-3.0zM1034.0 900h15.0v1h-15.0zM1094.0 900h8.0v1h-8.0zM1157.0 900h4.0v1h-4.0zM1224.0 900h7.0v1h-7.0zM1244.0 900h13.0v1h-13.0zM1309.0 900h7.0v1h-7.0zM1384.0 900h5.0v1h-5.0zM1420.0 900h5.0v1h-5.0zM317.0 920h33.0v1h-33.0zM468.0 920h4.0v1h-4.0zM528.0 920h9.0v1h-9.0zM572.0 920h17.0v1h-17.0zM628.0 920h6.0v1h-6.0zM718.0 920h4.0v1h-4.0zM1042.0 920h8.0v1h-8.0zM1104.0 920h9.0v1h-9.0zM1159.0 920h3.0v1h-3.0zM1227.0 920h5.0v1h-5.0zM1259.0 920h6.0v1h-6.0zM1305.0 920h12.0v1h-12.0zM1386.0 920h18.0v1h-18.0zM318.0 940h35.0v1h-35.0zM469.0 940h4.0v1h-4.0zM529.0 940h8.0v1h-8.0zM575.0 940h14.0v1h-14.0zM629.0 940h7.0v1h-7.0zM1022.0 940h32.0v1h-32.0zM1106.0 940h7.0v1h-7.0zM1160.0 940h4.0v1h-4.0zM1227.0 940h10.0v1h-10.0zM1330.0 940h4.0v1h-4.0zM1423.0 940h4.0v1h-4.0zM318.0 960h37.0v1h-37.0zM381.0 960h37.0v1h-37.0zM472.0 960h4.0v1h-4.0zM529.0 960h8.0v1h-8.0zM573.0 960h17.0v1h-17.0zM632.0 960h3.0v1h-3.0zM1039.0 960h15.0v1h-15.0zM1114.0 960h6.0v1h-6.0zM1225.0 960h21.0v1h-21.0zM1260.0 960h9.0v1h-9.0zM1331.0 960h5.0v1h-5.0zM1430.0 960h4.0v1h-4.0zM320.0 980h34.0v1h-34.0zM476.0 980h4.0v1h-4.0zM534.0 980h4.0v1h-4.0zM574.0 980h16.0v1h-16.0zM632.0 980h5.0v1h-5.0zM1033.0 980h19.0v1h-19.0zM1114.0 980h17.0v1h-17.0zM1229.0 980h17.0v1h-17.0zM1333.0 980h5.0v1h-5.0zM1432.0 980h4.0v1h-4.0zM320.0 1000h34.0v1h-34.0zM475.0 1000h5.0v1h-5.0zM530.0 1000h9.0v1h-9.0zM574.0 1000h18.0v1h-18.0zM649.0 1000h1.0v1h-1.0zM1037.0 1000h39.0v1h-39.0zM1114.0 1000h10.0v1h-10.0zM1231.0 1000h15.0v1h-15.0zM1334.0 1000h9.0v1h-9.0zM321.0 1020h34.0v1h-34.0zM477.0 1020h4.0v1h-4.0zM531.0 1020h8.0v1h-8.0zM579.0 1020h11.0v1h-11.0zM645.0 1020h5.0v1h-5.0zM1022.0 1020h38.0v1h-38.0zM1119.0 1020h5.0v1h-5.0zM1234.0 1020h12.0v1h-12.0zM1337.0 1020h8.0v1h-8.0zM322.0 1040h32.0v1h-32.0zM481.0 1040h4.0v1h-4.0zM534.0 1040h4.0v1h-4.0zM580.0 1040h12.0v1h-12.0zM646.0 1040h4.0v1h-4.0zM1031.0 1040h27.0v1h-27.0zM1122.0 1040h10.0v1h-10.0zM1234.0 1040h12.0v1h-12.0zM1337.0 1040h8.0v1h-8.0z" fill="#7ad4f0"/><path d="M268.0 431h45.0v18h-45.0zM327.0 431h110.0v18h-110.0zM439.0 431h14.0v18h-14.0zM469.0 431h17.0v18h-17.0zM503.0 431h17.0v18h-17.0zM532.0 431h39.0v18h-39.0zM572.0 431h12.0v18h-12.0zM600.0 431h13.0v18h-13.0zM623.0 431h22.0v18h-22.0zM647.0 431h8.0v18h-8.0zM661.0 431h13.0v18h-13.0zM678.0 431h12.0v18h-12.0zM702.0 431h12.0v18h-12.0zM718.0 431h16.0v18h-16.0zM743.0 431h14.0v18h-14.0zM794.0 431h235.0v18h-235.0zM1032.0 431h13.0v18h-13.0zM1079.0 431h25.0v18h-25.0zM1111.0 431h23.0v18h-23.0zM1135.0 431h13.0v18h-13.0zM1155.0 431h15.0v18h-15.0zM1176.0 431h56.0v18h-56.0zM1233.0 431h17.0v18h-17.0zM1265.0 431h28.0v18h-28.0zM1294.0 431h15.0v18h-15.0zM1332.0 431h13.0v18h-13.0zM1349.0 431h9.0v18h-9.0zM1375.0 431h33.0v18h-33.0zM1410.0 431h12.0v18h-12.0zM1428.0 431h15.0v18h-15.0zM1449.0 431h15.0v18h-15.0zM1502.0 431h1.0v18h-1.0zM273.0 451h38.0v18h-38.0zM345.0 451h74.0v18h-74.0zM422.0 451h34.0v18h-34.0zM462.0 451h25.0v18h-25.0zM488.0 451h13.0v18h-13.0zM510.0 451h24.0v18h-24.0zM536.0 451h38.0v18h-38.0zM574.0 451h-1.0v18h1.0zM579.0 451h12.0v18h-12.0zM605.0 451h14.0v18h-14.0zM626.0 451h21.0v18h-21.0zM648.0 451h10.0v18h-10.0zM663.0 451h12.0v18h-12.0zM680.0 451h17.0v18h-17.0zM703.0 451h15.0v18h-15.0zM720.0 451h16.0v18h-16.0zM744.0 451h16.0v18h-16.0zM1235.0 451h6.0v18h-6.0zM1243.0 451h20.0v18h-20.0zM1270.0 451h12.0v18h-12.0zM1296.0 451h13.0v18h-13.0zM1319.0 451h23.0v18h-23.0zM1344.0 451h13.0v18h-13.0zM1369.0 451h16.0v18h-16.0zM1387.0 451h13.0v18h-13.0zM1418.0 451h16.0v18h-16.0zM1440.0 451h15.0v18h-15.0zM273.0 471h40.0v18h-40.0zM346.0 471h83.0v18h-83.0zM431.0 471h15.0v18h-15.0zM470.0 471h26.0v18h-26.0zM501.0 471h12.0v18h-12.0zM515.0 471h18.0v18h-18.0zM541.0 471h33.0v18h-33.0zM572.0 471h3.0v18h-3.0zM582.0 471h13.0v18h-13.0zM607.0 471h12.0v18h-12.0zM629.0 471h32.0v18h-32.0zM665.0 471h12.0v18h-12.0zM682.0 471h13.0v18h-13.0zM700.0 471h30.0v18h-30.0zM732.0 471h14.0v18h-14.0zM752.0 471h24.0v18h-24.0zM1250.0 471h12.0v18h-12.0zM1271.0 471h12.0v18h-12.0zM1298.0 471h46.0v18h-46.0zM1348.0 471h21.0v18h-21.0zM1376.0 471h33.0v18h-33.0zM1411.0 471h14.0v18h-14.0zM1431.0 471h16.0v18h-16.0zM1452.0 471h17.0v18h-17.0zM274.0 491h39.0v18h-39.0zM350.0 491h17.0v18h-17.0zM399.0 491h41.0v18h-41.0zM441.0 491h16.0v18h-16.0zM471.0 491h22.0v18h-22.0zM502.0 491h23.0v18h-23.0zM527.0 491h13.0v18h-13.0zM545.0 491h27.0v18h-27.0zM572.0 491h0.0v18h0.0zM583.0 491h14.0v18h-14.0zM609.0 491h10.0v18h-10.0zM627.0 491h22.0v18h-22.0zM651.0 491h12.0v18h-12.0zM668.0 491h12.0v18h-12.0zM684.0 491h16.0v18h-16.0zM707.0 491h15.0v18h-15.0zM728.0 491h15.0v18h-15.0zM748.0 491h19.0v18h-19.0zM1235.0 491h15.0v18h-15.0zM1261.0 491h23.0v18h-23.0zM1298.0 491h13.0v18h-13.0zM1320.0 491h27.0v18h-27.0zM1349.0 491h13.0v18h-13.0zM1378.0 491h33.0v18h-33.0zM1412.0 491h14.0v18h-14.0zM1433.0 491h14.0v18h-14.0zM1453.0 491h18.0v18h-18.0zM276.0 511h36.0v18h-36.0zM350.0 511h29.0v18h-29.0zM400.0 511h40.0v18h-40.0zM443.0 511h14.0v18h-14.0zM473.0 511h13.0v18h-13.0zM502.0 511h20.0v18h-20.0zM532.0 511h42.0v18h-42.0zM574.0 511h8.0v18h-8.0zM585.0 511h12.0v18h-12.0zM610.0 511h9.0v18h-9.0zM627.0 511h17.0v18h-17.0zM645.0 511h10.0v18h-10.0zM660.0 511h16.0v18h-16.0zM678.0 511h11.0v18h-11.0zM702.0 511h18.0v18h-18.0zM721.0 511h19.0v18h-19.0zM747.0 511h17.0v18h-17.0zM1235.0 511h6.0v18h-6.0zM1250.0 511h12.0v18h-12.0zM1272.0 511h12.0v18h-12.0zM1300.0 511h38.0v18h-38.0zM1339.0 511h43.0v18h-43.0zM1384.0 511h13.0v18h-13.0zM1421.0 511h17.0v18h-17.0zM1441.0 511h13.0v18h-13.0zM277.0 531h36.0v18h-36.0zM345.0 531h88.0v18h-88.0zM435.0 531h24.0v18h-24.0zM474.0 531h14.0v18h-14.0zM501.0 531h27.0v18h-27.0zM530.0 531h14.0v18h-14.0zM555.0 531h13.0v18h-13.0zM590.0 531h60.0v18h-60.0zM653.0 531h12.0v18h-12.0zM668.0 531h12.0v18h-12.0zM682.0 531h17.0v18h-17.0zM706.0 531h15.0v18h-15.0zM728.0 531h16.0v18h-16.0zM750.0 531h18.0v18h-18.0zM1235.0 531h2.0v18h-2.0zM1242.0 531h17.0v18h-17.0zM1268.0 531h16.0v18h-16.0zM1301.0 531h10.0v18h-10.0zM1328.0 531h17.0v18h-17.0zM1348.0 531h14.0v18h-14.0zM1379.0 531h34.0v18h-34.0zM1414.0 531h12.0v18h-12.0zM1434.0 531h15.0v18h-15.0zM1455.0 531h16.0v18h-16.0zM278.0 551h34.0v18h-34.0zM344.0 551h92.0v18h-92.0zM438.0 551h14.0v18h-14.0zM475.0 551h12.0v18h-12.0zM501.0 551h23.0v18h-23.0zM525.0 551h14.0v18h-14.0zM546.0 551h14.0v18h-14.0zM586.0 551h36.0v18h-36.0zM624.0 551h13.0v18h-13.0zM640.0 551h29.0v18h-29.0zM671.0 551h14.0v18h-14.0zM688.0 551h16.0v18h-16.0zM710.0 551h13.0v18h-13.0zM730.0 551h17.0v18h-17.0zM1235.0 551h6.0v18h-6.0zM1244.0 551h17.0v18h-17.0zM1274.0 551h87.0v18h-87.0zM1364.0 551h12.0v18h-12.0zM1382.0 551h57.0v18h-57.0zM1443.0 551h55.0v18h-55.0zM280.0 571h33.0v18h-33.0zM350.0 571h75.0v18h-75.0zM428.0 571h13.0v18h-13.0zM477.0 571h17.0v18h-17.0zM502.0 571h24.0v18h-24.0zM528.0 571h22.0v18h-22.0zM557.0 571h17.0v18h-17.0zM574.0 571h0.0v18h0.0zM589.0 571h21.0v18h-21.0zM611.0 571h38.0v18h-38.0zM653.0 571h12.0v18h-12.0zM671.0 571h40.0v18h-40.0zM713.0 571h19.0v18h-19.0zM739.0 571h16.0v18h-16.0zM1235.0 571h6.0v18h-6.0zM1252.0 571h12.0v18h-12.0zM1276.0 571h26.0v18h-26.0zM1307.0 571h38.0v18h-38.0zM1351.0 571h12.0v18h-12.0zM1379.0 571h36.0v18h-36.0zM1418.0 571h14.0v18h-14.0zM1437.0 571h14.0v18h-14.0zM282.0 591h30.0v18h-30.0zM345.0 591h86.0v18h-86.0zM432.0 591h15.0v18h-15.0zM478.0 591h14.0v18h-14.0zM503.0 591h18.0v18h-18.0zM523.0 591h16.0v18h-16.0zM547.0 591h21.0v18h-21.0zM588.0 591h35.0v18h-35.0zM626.0 591h12.0v18h-12.0zM642.0 591h30.0v18h-30.0zM673.0 591h37.0v18h-37.0zM712.0 591h13.0v18h-13.0zM733.0 591h13.0v18h-13.0zM1253.0 591h13.0v18h-13.0zM1277.0 591h23.0v18h-23.0zM1311.0 591h29.0v18h-29.0zM1353.0 591h12.0v18h-12.0zM1380.0 591h56.0v18h-56.0zM1438.0 591h14.0v18h-14.0zM282.0 611h31.0v18h-31.0zM346.0 611h87.0v18h-87.0zM436.0 611h14.0v18h-14.0zM480.0 611h14.0v18h-14.0zM503.0 611h19.0v18h-19.0zM537.0 611h37.0v18h-37.0zM576.0 611h46.0v18h-46.0zM623.0 611h30.0v18h-30.0zM655.0 611h12.0v18h-12.0zM675.0 611h46.0v18h-46.0zM723.0 611h17.0v18h-17.0zM751.0 611h18.0v18h-18.0zM986.0 611h48.0v18h-48.0zM1044.0 611h17.0v18h-17.0zM1062.0 611h19.0v18h-19.0zM1086.0 611h15.0v18h-15.0zM1107.0 611h20.0v18h-20.0zM1132.0 611h16.0v18h-16.0zM1154.0 611h13.0v18h-13.0zM1178.0 611h12.0v18h-12.0zM1213.0 611h15.0v18h-15.0zM1231.0 611h27.0v18h-27.0zM1259.0 611h12.0v18h-12.0zM1278.0 611h29.0v18h-29.0zM1309.0 611h47.0v18h-47.0zM1358.0 611h11.0v18h-11.0zM1384.0 611h35.0v18h-35.0zM1421.0 611h15.0v18h-15.0zM1445.0 611h58.0v18h-58.0zM283.0 631h28.0v18h-28.0zM351.0 631h67.0v18h-67.0zM420.0 631h28.0v18h-28.0zM464.0 631h20.0v18h-20.0zM486.0 631h13.0v18h-13.0zM510.0 631h19.0v18h-19.0zM531.0 631h39.0v18h-39.0zM574.0 631h16.0v18h-16.0zM597.0 631h23.0v18h-23.0zM621.0 631h12.0v18h-12.0zM640.0 631h12.0v18h-12.0zM657.0 631h13.0v18h-13.0zM677.0 631h10.0v18h-10.0zM698.0 631h31.0v18h-31.0zM735.0 631h13.0v18h-13.0zM979.0 631h48.0v18h-48.0zM1043.0 631h15.0v18h-15.0zM1062.0 631h16.0v18h-16.0zM1084.0 631h10.0v18h-10.0zM1095.0 631h12.0v18h-12.0zM1123.0 631h12.0v18h-12.0zM1137.0 631h14.0v18h-14.0zM1157.0 631h13.0v18h-13.0zM1181.0 631h13.0v18h-13.0zM1202.0 631h16.0v18h-16.0zM1224.0 631h34.0v18h-34.0zM1263.0 631h13.0v18h-13.0zM1303.0 631h10.0v18h-10.0zM1320.0 631h15.0v18h-15.0zM1337.0 631h10.0v18h-10.0zM1352.0 631h30.0v18h-30.0zM1387.0 631h17.0v18h-17.0zM1420.0 631h14.0v18h-14.0zM1446.0 631h16.0v18h-16.0zM1499.0 631h5.0v18h-5.0zM284.0 651h28.0v18h-28.0zM347.0 651h79.0v18h-79.0zM430.0 651h13.0v18h-13.0zM481.0 651h14.0v18h-14.0zM504.0 651h18.0v18h-18.0zM538.0 651h36.0v18h-36.0zM580.0 651h13.0v18h-13.0zM613.0 651h11.0v18h-11.0zM628.0 651h21.0v18h-21.0zM658.0 651h12.0v18h-12.0zM681.0 651h13.0v18h-13.0zM699.0 651h32.0v18h-32.0zM737.0 651h12.0v18h-12.0zM981.0 651h39.0v18h-39.0zM1053.0 651h10.0v18h-10.0zM1072.0 651h24.0v18h-24.0zM1099.0 651h10.0v18h-10.0zM1119.0 651h27.0v18h-27.0zM1147.0 651h15.0v18h-15.0zM1165.0 651h15.0v18h-15.0zM1186.0 651h14.0v18h-14.0zM1211.0 651h23.0v18h-23.0zM1236.0 651h24.0v18h-24.0zM1265.0 651h13.0v18h-13.0zM1305.0 651h10.0v18h-10.0zM1333.0 651h12.0v18h-12.0zM1355.0 651h11.0v18h-11.0zM1388.0 651h14.0v18h-14.0zM1422.0 651h16.0v18h-16.0zM1447.0 651h16.0v18h-16.0zM286.0 671h27.0v18h-27.0zM350.0 671h66.0v18h-66.0zM418.0 671h34.0v18h-34.0zM462.0 671h24.0v18h-24.0zM487.0 671h13.0v18h-13.0zM506.0 671h19.0v18h-19.0zM532.0 671h16.0v18h-16.0zM578.0 671h15.0v18h-15.0zM613.0 671h11.0v18h-11.0zM633.0 671h18.0v18h-18.0zM660.0 671h12.0v18h-12.0zM683.0 671h14.0v18h-14.0zM714.0 671h16.0v18h-16.0zM737.0 671h14.0v18h-14.0zM983.0 671h44.0v18h-44.0zM1044.0 671h15.0v18h-15.0zM1060.0 671h19.0v18h-19.0zM1091.0 671h10.0v18h-10.0zM1107.0 671h43.0v18h-43.0zM1154.0 671h14.0v18h-14.0zM1183.0 671h11.0v18h-11.0zM1203.0 671h17.0v18h-17.0zM1227.0 671h45.0v18h-45.0zM1279.0 671h22.0v18h-22.0zM1308.0 671h10.0v18h-10.0zM1328.0 671h18.0v18h-18.0zM1355.0 671h12.0v18h-12.0zM1390.0 671h16.0v18h-16.0zM1423.0 671h17.0v18h-17.0zM1450.0 671h16.0v18h-16.0zM288.0 691h25.0v18h-25.0zM348.0 691h87.0v18h-87.0zM440.0 691h14.0v18h-14.0zM483.0 691h12.0v18h-12.0zM504.0 691h15.0v18h-15.0zM521.0 691h20.0v18h-20.0zM550.0 691h12.0v18h-12.0zM590.0 691h14.0v18h-14.0zM609.0 691h17.0v18h-17.0zM627.0 691h12.0v18h-12.0zM643.0 691h10.0v18h-10.0zM659.0 691h14.0v18h-14.0zM686.0 691h15.0v18h-15.0zM708.0 691h13.0v18h-13.0zM741.0 691h15.0v18h-15.0zM763.0 691h108.0v18h-108.0zM987.0 691h45.0v18h-45.0zM1052.0 691h13.0v18h-13.0zM1069.0 691h16.0v18h-16.0zM1094.0 691h31.0v18h-31.0zM1129.0 691h12.0v18h-12.0zM1158.0 691h15.0v18h-15.0zM1184.0 691h12.0v18h-12.0zM1220.0 691h14.0v18h-14.0zM1237.0 691h21.0v18h-21.0zM1266.0 691h13.0v18h-13.0zM1306.0 691h9.0v18h-9.0zM1327.0 691h18.0v18h-18.0zM1358.0 691h13.0v18h-13.0zM1392.0 691h16.0v18h-16.0zM1425.0 691h16.0v18h-16.0zM289.0 711h24.0v18h-24.0zM353.0 711h25.0v18h-25.0zM400.0 711h41.0v18h-41.0zM444.0 711h15.0v18h-15.0zM484.0 711h17.0v18h-17.0zM505.0 711h30.0v18h-30.0zM537.0 711h24.0v18h-24.0zM591.0 711h13.0v18h-13.0zM610.0 711h16.0v18h-16.0zM628.0 711h12.0v18h-12.0zM648.0 711h13.0v18h-13.0zM664.0 711h12.0v18h-12.0zM689.0 711h17.0v18h-17.0zM716.0 711h17.0v18h-17.0zM745.0 711h16.0v18h-16.0zM945.0 711h91.0v18h-91.0zM1038.0 711h11.0v18h-11.0zM1074.0 711h14.0v18h-14.0zM1096.0 711h24.0v18h-24.0zM1122.0 711h11.0v18h-11.0zM1154.0 711h17.0v18h-17.0zM1186.0 711h14.0v18h-14.0zM1219.0 711h15.0v18h-15.0zM1239.0 711h18.0v18h-18.0zM1281.0 711h21.0v18h-21.0zM1310.0 711h10.0v18h-10.0zM1328.0 711h29.0v18h-29.0zM1360.0 711h12.0v18h-12.0zM1394.0 711h13.0v18h-13.0zM1426.0 711h17.0v18h-17.0zM291.0 731h20.0v18h-20.0zM351.0 731h70.0v18h-70.0zM423.0 731h25.0v18h-25.0zM466.0 731h18.0v18h-18.0zM490.0 731h13.0v18h-13.0zM512.0 731h20.0v18h-20.0zM534.0 731h23.0v18h-23.0zM592.0 731h14.0v18h-14.0zM611.0 731h14.0v18h-14.0zM630.0 731h12.0v18h-12.0zM648.0 731h12.0v18h-12.0zM691.0 731h16.0v18h-16.0zM719.0 731h16.0v18h-16.0zM989.0 731h18.0v18h-18.0zM1053.0 731h13.0v18h-13.0zM1069.0 731h20.0v18h-20.0zM1097.0 731h21.0v18h-21.0zM1126.0 731h11.0v18h-11.0zM1161.0 731h12.0v18h-12.0zM1195.0 731h22.0v18h-22.0zM1218.0 731h35.0v18h-35.0zM1255.0 731h13.0v18h-13.0zM1279.0 731h23.0v18h-23.0zM1313.0 731h10.0v18h-10.0zM1328.0 731h30.0v18h-30.0zM1361.0 731h12.0v18h-12.0zM1395.0 731h13.0v18h-13.0zM1430.0 731h16.0v18h-16.0zM292.0 751h21.0v18h-21.0zM350.0 751h78.0v18h-78.0zM446.0 751h14.0v18h-14.0zM492.0 751h14.0v18h-14.0zM511.0 751h27.0v18h-27.0zM539.0 751h33.0v18h-33.0zM594.0 751h21.0v18h-21.0zM618.0 751h32.0v18h-32.0zM692.0 751h15.0v18h-15.0zM720.0 751h16.0v18h-16.0zM990.0 751h34.0v18h-34.0zM1044.0 751h23.0v18h-23.0zM1072.0 751h13.0v18h-13.0zM1094.0 751h47.0v18h-47.0zM1162.0 751h13.0v18h-13.0zM1197.0 751h58.0v18h-58.0zM1257.0 751h11.0v18h-11.0zM1283.0 751h25.0v18h-25.0zM1313.0 751h10.0v18h-10.0zM1331.0 751h26.0v18h-26.0zM1362.0 751h12.0v18h-12.0zM1396.0 751h16.0v18h-16.0zM1435.0 751h14.0v18h-14.0zM293.0 771h18.0v18h-18.0zM352.0 771h70.0v18h-70.0zM424.0 771h25.0v18h-25.0zM464.0 771h27.0v18h-27.0zM493.0 771h12.0v18h-12.0zM512.0 771h23.0v18h-23.0zM542.0 771h32.0v18h-32.0zM600.0 771h12.0v18h-12.0zM623.0 771h24.0v18h-24.0zM693.0 771h13.0v18h-13.0zM719.0 771h17.0v18h-17.0zM992.0 771h23.0v18h-23.0zM1042.0 771h24.0v18h-24.0zM1078.0 771h13.0v18h-13.0zM1103.0 771h17.0v18h-17.0zM1132.0 771h15.0v18h-15.0zM1164.0 771h12.0v18h-12.0zM1198.0 771h17.0v18h-17.0zM1221.0 771h14.0v18h-14.0zM1258.0 771h11.0v18h-11.0zM1284.0 771h18.0v18h-18.0zM1314.0 771h12.0v18h-12.0zM1335.0 771h16.0v18h-16.0zM1367.0 771h11.0v18h-11.0zM1397.0 771h14.0v18h-14.0zM295.0 791h18.0v18h-18.0zM354.0 791h25.0v18h-25.0zM401.0 791h36.0v18h-36.0zM447.0 791h15.0v18h-15.0zM495.0 791h11.0v18h-11.0zM513.0 791h25.0v18h-25.0zM544.0 791h30.0v18h-30.0zM600.0 791h12.0v18h-12.0zM623.0 791h25.0v18h-25.0zM696.0 791h13.0v18h-13.0zM725.0 791h15.0v18h-15.0zM993.0 791h40.0v18h-40.0zM1053.0 791h11.0v18h-11.0zM1065.0 791h22.0v18h-22.0zM1093.0 791h22.0v18h-22.0zM1116.0 791h52.0v18h-52.0zM1199.0 791h12.0v18h-12.0zM1223.0 791h29.0v18h-29.0zM1264.0 791h12.0v18h-12.0zM1315.0 791h12.0v18h-12.0zM1333.0 791h25.0v18h-25.0zM1368.0 791h11.0v18h-11.0zM1400.0 791h14.0v18h-14.0zM296.0 811h17.0v18h-17.0zM346.0 811h99.0v18h-99.0zM448.0 811h15.0v18h-15.0zM496.0 811h17.0v18h-17.0zM519.0 811h23.0v18h-23.0zM550.0 811h24.0v18h-24.0zM574.0 811h11.0v18h-11.0zM601.0 811h13.0v18h-13.0zM628.0 811h21.0v18h-21.0zM697.0 811h14.0v18h-14.0zM726.0 811h14.0v18h-14.0zM995.0 811h45.0v18h-45.0zM1049.0 811h13.0v18h-13.0zM1064.0 811h23.0v18h-23.0zM1092.0 811h13.0v18h-13.0zM1107.0 811h14.0v18h-14.0zM1135.0 811h14.0v18h-14.0zM1164.0 811h13.0v18h-13.0zM1199.0 811h18.0v18h-18.0zM1222.0 811h13.0v18h-13.0zM1286.0 811h23.0v18h-23.0zM1314.0 811h20.0v18h-20.0zM1335.0 811h11.0v18h-11.0zM1369.0 811h12.0v18h-12.0zM1401.0 811h14.0v18h-14.0zM297.0 831h15.0v18h-15.0zM350.0 831h81.0v18h-81.0zM450.0 831h15.0v18h-15.0zM497.0 831h19.0v18h-19.0zM522.0 831h32.0v18h-32.0zM558.0 831h16.0v18h-16.0zM590.0 831h21.0v18h-21.0zM613.0 831h15.0v18h-15.0zM634.0 831h15.0v18h-15.0zM698.0 831h16.0v18h-16.0zM996.0 831h29.0v18h-29.0zM1050.0 831h18.0v18h-18.0zM1080.0 831h13.0v18h-13.0zM1097.0 831h29.0v18h-29.0zM1138.0 831h14.0v18h-14.0zM1167.0 831h15.0v18h-15.0zM1204.0 831h17.0v18h-17.0zM1231.0 831h20.0v18h-20.0zM1287.0 831h21.0v18h-21.0zM1316.0 831h25.0v18h-25.0zM1344.0 831h11.0v18h-11.0zM1370.0 831h12.0v18h-12.0zM1402.0 831h15.0v18h-15.0zM299.0 851h16.0v18h-16.0zM351.0 851h78.0v18h-78.0zM452.0 851h15.0v18h-15.0zM498.0 851h19.0v18h-19.0zM524.0 851h50.0v18h-50.0zM601.0 851h12.0v18h-12.0zM625.0 851h24.0v18h-24.0zM700.0 851h15.0v18h-15.0zM997.0 851h41.0v18h-41.0zM1050.0 851h11.0v18h-11.0zM1081.0 851h12.0v18h-12.0zM1101.0 851h24.0v18h-24.0zM1140.0 851h14.0v18h-14.0zM1206.0 851h16.0v18h-16.0zM1229.0 851h12.0v18h-12.0zM1289.0 851h96.0v18h-96.0zM1403.0 851h15.0v18h-15.0zM301.0 871h17.0v18h-17.0zM354.0 871h66.0v18h-66.0zM426.0 871h36.0v18h-36.0zM500.0 871h21.0v18h-21.0zM530.0 871h44.0v18h-44.0zM574.0 871h3.0v18h-3.0zM603.0 871h9.0v18h-9.0zM628.0 871h19.0v18h-19.0zM702.0 871h15.0v18h-15.0zM999.0 871h16.0v18h-16.0zM1049.0 871h13.0v18h-13.0zM1082.0 871h12.0v18h-12.0zM1101.0 871h23.0v18h-23.0zM1141.0 871h14.0v18h-14.0zM1207.0 871h15.0v18h-15.0zM1234.0 871h29.0v18h-29.0zM1291.0 871h12.0v18h-12.0zM1316.0 871h17.0v18h-17.0zM1340.0 871h10.0v18h-10.0zM1360.0 871h21.0v18h-21.0zM1405.0 871h14.0v18h-14.0zM302.0 891h14.0v18h-14.0zM349.0 891h81.0v18h-81.0zM453.0 891h14.0v18h-14.0zM506.0 891h15.0v18h-15.0zM538.0 891h36.0v18h-36.0zM574.0 891h11.0v18h-11.0zM604.0 891h13.0v18h-13.0zM629.0 891h20.0v18h-20.0zM703.0 891h15.0v18h-15.0zM1001.0 891h33.0v18h-33.0zM1049.0 891h16.0v18h-16.0zM1085.0 891h9.0v18h-9.0zM1102.0 891h24.0v18h-24.0zM1143.0 891h14.0v18h-14.0zM1209.0 891h15.0v18h-15.0zM1232.0 891h12.0v18h-12.0zM1291.0 891h18.0v18h-18.0zM1316.0 891h28.0v18h-28.0zM1372.0 891h12.0v18h-12.0zM1407.0 891h13.0v18h-13.0zM303.0 911h14.0v18h-14.0zM350.0 911h81.0v18h-81.0zM454.0 911h14.0v18h-14.0zM508.0 911h20.0v18h-20.0zM553.0 911h21.0v18h-21.0zM617.0 911h11.0v18h-11.0zM634.0 911h14.0v18h-14.0zM704.0 911h14.0v18h-14.0zM1002.0 911h40.0v18h-40.0zM1050.0 911h19.0v18h-19.0zM1095.0 911h9.0v18h-9.0zM1113.0 911h21.0v18h-21.0zM1144.0 911h15.0v18h-15.0zM1210.0 911h17.0v18h-17.0zM1241.0 911h18.0v18h-18.0zM1293.0 911h12.0v18h-12.0zM1317.0 911h26.0v18h-26.0zM1373.0 911h13.0v18h-13.0zM1404.0 911h16.0v18h-16.0zM304.0 931h14.0v18h-14.0zM353.0 931h67.0v18h-67.0zM455.0 931h14.0v18h-14.0zM509.0 931h20.0v18h-20.0zM553.0 931h21.0v18h-21.0zM618.0 931h11.0v18h-11.0zM636.0 931h15.0v18h-15.0zM1003.0 931h19.0v18h-19.0zM1054.0 931h11.0v18h-11.0zM1096.0 931h10.0v18h-10.0zM1113.0 931h16.0v18h-16.0zM1146.0 931h14.0v18h-14.0zM1212.0 931h15.0v18h-15.0zM1237.0 931h30.0v18h-30.0zM1317.0 931h13.0v18h-13.0zM1334.0 931h18.0v18h-18.0zM1408.0 931h15.0v18h-15.0zM307.0 951h11.0v18h-11.0zM356.0 951h25.0v18h-25.0zM457.0 951h15.0v18h-15.0zM510.0 951h19.0v18h-19.0zM560.0 951h14.0v18h-14.0zM590.0 951h21.0v18h-21.0zM618.0 951h14.0v18h-14.0zM635.0 951h17.0v18h-17.0zM1004.0 951h35.0v18h-35.0zM1054.0 951h13.0v18h-13.0zM1100.0 951h14.0v18h-14.0zM1120.0 951h30.0v18h-30.0zM1213.0 951h12.0v18h-12.0zM1248.0 951h12.0v18h-12.0zM1318.0 951h13.0v18h-13.0zM1336.0 951h16.0v18h-16.0zM1415.0 951h15.0v18h-15.0zM308.0 971h12.0v18h-12.0zM354.0 971h87.0v18h-87.0zM459.0 971h17.0v18h-17.0zM512.0 971h22.0v18h-22.0zM560.0 971h14.0v18h-14.0zM590.0 971h21.0v18h-21.0zM621.0 971h11.0v18h-11.0zM637.0 971h13.0v18h-13.0zM1006.0 971h27.0v18h-27.0zM1052.0 971h36.0v18h-36.0zM1101.0 971h13.0v18h-13.0zM1214.0 971h15.0v18h-15.0zM1320.0 971h13.0v18h-13.0zM1338.0 971h25.0v18h-25.0zM1415.0 971h17.0v18h-17.0zM309.0 991h11.0v18h-11.0zM354.0 991h87.0v18h-87.0zM461.0 991h14.0v18h-14.0zM515.0 991h15.0v18h-15.0zM562.0 991h12.0v18h-12.0zM632.0 991h17.0v18h-17.0zM1008.0 991h29.0v18h-29.0zM1076.0 991h15.0v18h-15.0zM1102.0 991h12.0v18h-12.0zM1124.0 991h29.0v18h-29.0zM1216.0 991h15.0v18h-15.0zM1322.0 991h12.0v18h-12.0zM1343.0 991h22.0v18h-22.0zM310.0 1011h11.0v18h-11.0zM355.0 1011h76.0v18h-76.0zM462.0 1011h15.0v18h-15.0zM516.0 1011h15.0v18h-15.0zM563.0 1011h11.0v18h-11.0zM574.0 1011h5.0v18h-5.0zM590.0 1011h23.0v18h-23.0zM634.0 1011h11.0v18h-11.0zM1010.0 1011h12.0v18h-12.0zM1104.0 1011h15.0v18h-15.0zM1124.0 1011h13.0v18h-13.0zM1217.0 1011h17.0v18h-17.0zM1325.0 1011h12.0v18h-12.0zM312.0 1031h10.0v18h-10.0zM354.0 1031h89.0v18h-89.0zM464.0 1031h17.0v18h-17.0zM518.0 1031h16.0v18h-16.0zM565.0 1031h9.0v18h-9.0zM634.0 1031h12.0v18h-12.0zM1011.0 1031h20.0v18h-20.0zM1058.0 1031h23.0v18h-23.0zM1108.0 1031h14.0v18h-14.0zM1132.0 1031h16.0v18h-16.0zM1219.0 1031h15.0v18h-15.0zM1325.0 1031h12.0v18h-12.0z" fill="#7ad4f0"/><path d="M267 431h1v18h-1zM437 431h1v18h-1zM468 431h1v18h-1zM500 431h1v18h-1zM571 431h1v18h-1zM595 431h1v18h-1zM645 431h1v18h-1zM660 431h1v18h-1zM714 431h1v18h-1zM741 431h1v18h-1zM1031 431h1v18h-1zM1134 431h1v18h-1zM1174 431h1v18h-1zM1232 431h1v18h-1zM1293 431h1v18h-1zM1331 431h1v18h-1zM1345 431h1v18h-1zM1373 431h1v18h-1zM1408 431h1v18h-1zM1427 431h1v18h-1zM1448 431h1v18h-1zM269 451h1v18h-1zM419 451h1v18h-1zM487 451h1v18h-1zM534 451h1v18h-1zM578 451h1v18h-1zM604 451h1v18h-1zM647 451h1v18h-1zM662 451h1v18h-1zM679 451h1v18h-1zM718 451h1v18h-1zM742 451h1v18h-1zM1242 451h1v18h-1zM1268 451h1v18h-1zM1295 451h1v18h-1zM1342 451h1v18h-1zM1385 451h1v18h-1zM1416 451h1v18h-1zM1439 451h1v18h-1zM271 471h1v18h-1zM430 471h1v18h-1zM466 471h1v18h-1zM513 471h1v18h-1zM539 471h1v18h-1zM581 471h1v18h-1zM606 471h1v18h-1zM649 471h1v18h-1zM681 471h1v18h-1zM730 471h1v18h-1zM751 471h1v18h-1zM1248 471h1v18h-1zM1269 471h1v18h-1zM1296 471h1v18h-1zM1344 471h1v18h-1zM1375 471h1v18h-1zM1410 471h1v18h-1zM1430 471h1v18h-1zM1450 471h1v18h-1zM272 491h1v18h-1zM348 491h1v18h-1zM440 491h1v18h-1zM469 491h1v18h-1zM525 491h1v18h-1zM543 491h1v18h-1zM582 491h1v18h-1zM607 491h1v18h-1zM650 491h1v18h-1zM666 491h1v18h-1zM683 491h1v18h-1zM706 491h1v18h-1zM726 491h1v18h-1zM747 491h1v18h-1zM1259 491h1v18h-1zM1348 491h1v18h-1zM1376 491h1v18h-1zM1411 491h1v18h-1zM1431 491h1v18h-1zM1452 491h1v18h-1zM274 511h1v18h-1zM349 511h1v18h-1zM441 511h1v18h-1zM471 511h1v18h-1zM500 511h1v18h-1zM584 511h1v18h-1zM609 511h1v18h-1zM644 511h1v18h-1zM676 511h1v18h-1zM720 511h1v18h-1zM745 511h1v18h-1zM1249 511h1v18h-1zM1271 511h1v18h-1zM1299 511h1v18h-1zM1338 511h1v18h-1zM1382 511h1v18h-1zM1440 511h1v18h-1zM275 531h1v18h-1zM433 531h1v18h-1zM472 531h1v18h-1zM528 531h1v18h-1zM554 531h1v18h-1zM651 531h1v18h-1zM682 531h1v18h-1zM704 531h1v18h-1zM727 531h1v18h-1zM748 531h1v18h-1zM1240 531h1v18h-1zM1267 531h1v18h-1zM1347 531h1v18h-1zM1377 531h1v18h-1zM1413 531h1v18h-1zM1433 531h1v18h-1zM1453 531h1v18h-1zM277 551h1v18h-1zM436 551h1v18h-1zM474 551h1v18h-1zM524 551h1v18h-1zM545 551h1v18h-1zM585 551h1v18h-1zM623 551h1v18h-1zM669 551h1v18h-1zM686 551h1v18h-1zM709 551h1v18h-1zM729 551h1v18h-1zM1243 551h1v18h-1zM1272 551h1v18h-1zM1363 551h1v18h-1zM1380 551h1v18h-1zM1442 551h1v18h-1zM278 571h1v18h-1zM425 571h1v18h-1zM475 571h1v18h-1zM526 571h1v18h-1zM555 571h1v18h-1zM610 571h1v18h-1zM712 571h1v18h-1zM738 571h1v18h-1zM1250 571h1v18h-1zM1274 571h1v18h-1zM1306 571h1v18h-1zM1350 571h1v18h-1zM1378 571h1v18h-1zM1416 571h1v18h-1zM1437 571h1v18h-1zM280 591h1v18h-1zM431 591h1v18h-1zM477 591h1v18h-1zM521 591h1v18h-1zM546 591h1v18h-1zM587 591h1v18h-1zM625 591h1v18h-1zM641 591h1v18h-1zM672 591h1v18h-1zM710 591h1v18h-1zM732 591h1v18h-1zM1252 591h1v18h-1zM1275 591h1v18h-1zM1351 591h1v18h-1zM1379 591h1v18h-1zM1437 591h1v18h-1zM281 611h1v18h-1zM434 611h1v18h-1zM478 611h1v18h-1zM501 611h1v18h-1zM575 611h1v18h-1zM622 611h1v18h-1zM654 611h1v18h-1zM674 611h1v18h-1zM721 611h1v18h-1zM750 611h1v18h-1zM984 611h1v18h-1zM1061 611h1v18h-1zM1085 611h1v18h-1zM1130 611h1v18h-1zM1152 611h1v18h-1zM1176 611h1v18h-1zM1229 611h1v18h-1zM1258 611h1v18h-1zM1277 611h1v18h-1zM1307 611h1v18h-1zM1356 611h1v18h-1zM1383 611h1v18h-1zM1419 611h1v18h-1zM1443 611h1v18h-1zM281 631h1v18h-1zM418 631h1v18h-1zM484 631h1v18h-1zM529 631h1v18h-1zM573 631h1v18h-1zM573 631h1v18h-1zM620 631h1v18h-1zM656 631h1v18h-1zM675 631h1v18h-1zM733 631h1v18h-1zM977 631h1v18h-1zM1058 631h1v18h-1zM1094 631h1v18h-1zM1136 631h1v18h-1zM1156 631h1v18h-1zM1179 631h1v18h-1zM1200 631h1v18h-1zM1261 631h1v18h-1zM1302 631h1v18h-1zM1386 631h1v18h-1zM1418 631h1v18h-1zM1445 631h1v18h-1zM283 651h1v18h-1zM428 651h1v18h-1zM480 651h1v18h-1zM503 651h1v18h-1zM537 651h1v18h-1zM579 651h1v18h-1zM610 651h1v18h-1zM657 651h1v18h-1zM679 651h1v18h-1zM735 651h1v18h-1zM979 651h1v18h-1zM1052 651h1v18h-1zM1097 651h1v18h-1zM1146 651h1v18h-1zM1163 651h1v18h-1zM1185 651h1v18h-1zM1234 651h1v18h-1zM1264 651h1v18h-1zM1303 651h1v18h-1zM1332 651h1v18h-1zM1353 651h1v18h-1zM1421 651h1v18h-1zM1446 651h1v18h-1zM284 671h1v18h-1zM416 671h1v18h-1zM486 671h1v18h-1zM531 671h1v18h-1zM576 671h1v18h-1zM612 671h1v18h-1zM659 671h1v18h-1zM680 671h1v18h-1zM736 671h1v18h-1zM980 671h1v18h-1zM1153 671h1v18h-1zM1181 671h1v18h-1zM1201 671h1v18h-1zM1278 671h1v18h-1zM1354 671h1v18h-1zM1389 671h1v18h-1zM1422 671h1v18h-1zM1449 671h1v18h-1zM287 691h1v18h-1zM438 691h1v18h-1zM481 691h1v18h-1zM519 691h1v18h-1zM548 691h1v18h-1zM588 691h1v18h-1zM626 691h1v18h-1zM642 691h1v18h-1zM685 691h1v18h-1zM707 691h1v18h-1zM739 691h1v18h-1zM985 691h1v18h-1zM1067 691h1v18h-1zM1125 691h1v18h-1zM1157 691h1v18h-1zM1182 691h1v18h-1zM1236 691h1v18h-1zM1265 691h1v18h-1zM1305 691h1v18h-1zM1357 691h1v18h-1zM1391 691h1v18h-1zM1424 691h1v18h-1zM287 711h1v18h-1zM352 711h1v18h-1zM443 711h1v18h-1zM483 711h1v18h-1zM535 711h1v18h-1zM590 711h1v18h-1zM646 711h1v18h-1zM663 711h1v18h-1zM688 711h1v18h-1zM713 711h1v18h-1zM744 711h1v18h-1zM1036 711h1v18h-1zM1073 711h1v18h-1zM1120 711h1v18h-1zM1185 711h1v18h-1zM1237 711h1v18h-1zM1280 711h1v18h-1zM1309 711h1v18h-1zM1359 711h1v18h-1zM1392 711h1v18h-1zM1425 711h1v18h-1zM289 731h1v18h-1zM421 731h1v18h-1zM465 731h1v18h-1zM489 731h1v18h-1zM532 731h1v18h-1zM591 731h1v18h-1zM629 731h1v18h-1zM647 731h1v18h-1zM689 731h1v18h-1zM714 731h1v18h-1zM987 731h1v18h-1zM1068 731h1v18h-1zM1124 731h1v18h-1zM1160 731h1v18h-1zM1194 731h1v18h-1zM1253 731h1v18h-1zM1310 731h1v18h-1zM1360 731h1v18h-1zM1393 731h1v18h-1zM1428 731h1v18h-1zM290 751h1v18h-1zM444 751h1v18h-1zM490 751h1v18h-1zM538 751h1v18h-1zM593 751h1v18h-1zM691 751h1v18h-1zM715 751h1v18h-1zM988 751h1v18h-1zM1070 751h1v18h-1zM1161 751h1v18h-1zM1196 751h1v18h-1zM1255 751h1v18h-1zM1281 751h1v18h-1zM1312 751h1v18h-1zM1395 751h1v18h-1zM1434 751h1v18h-1zM291 771h1v18h-1zM422 771h1v18h-1zM491 771h1v18h-1zM540 771h1v18h-1zM594 771h1v18h-1zM692 771h1v18h-1zM717 771h1v18h-1zM991 771h1v18h-1zM1077 771h1v18h-1zM1162 771h1v18h-1zM1197 771h1v18h-1zM1219 771h1v18h-1zM1256 771h1v18h-1zM1283 771h1v18h-1zM1313 771h1v18h-1zM1365 771h1v18h-1zM1396 771h1v18h-1zM293 791h1v18h-1zM446 791h1v18h-1zM493 791h1v18h-1zM542 791h1v18h-1zM597 791h1v18h-1zM694 791h1v18h-1zM723 791h1v18h-1zM992 791h1v18h-1zM1064 791h1v18h-1zM1115 791h1v18h-1zM1197 791h1v18h-1zM1262 791h1v18h-1zM1366 791h1v18h-1zM1398 791h1v18h-1zM294 811h1v18h-1zM447 811h1v18h-1zM494 811h1v18h-1zM549 811h1v18h-1zM598 811h1v18h-1zM695 811h1v18h-1zM724 811h1v18h-1zM994 811h1v18h-1zM1063 811h1v18h-1zM1105 811h1v18h-1zM1163 811h1v18h-1zM1198 811h1v18h-1zM1220 811h1v18h-1zM1284 811h1v18h-1zM1334 811h1v18h-1zM1367 811h1v18h-1zM1399 811h1v18h-1zM296 831h1v18h-1zM449 831h1v18h-1zM496 831h1v18h-1zM556 831h1v18h-1zM697 831h1v18h-1zM994 831h1v18h-1zM1079 831h1v18h-1zM1137 831h1v18h-1zM1165 831h1v18h-1zM1203 831h1v18h-1zM1286 831h1v18h-1zM1341 831h1v18h-1zM1369 831h1v18h-1zM1401 831h1v18h-1zM297 851h1v18h-1zM450 851h1v18h-1zM497 851h1v18h-1zM600 851h1v18h-1zM698 851h1v18h-1zM996 851h1v18h-1zM1080 851h1v18h-1zM1138 851h1v18h-1zM1204 851h1v18h-1zM1228 851h1v18h-1zM1287 851h1v18h-1zM1402 851h1v18h-1zM299 871h1v18h-1zM424 871h1v18h-1zM499 871h1v18h-1zM601 871h1v18h-1zM700 871h1v18h-1zM1140 871h1v18h-1zM1206 871h1v18h-1zM1289 871h1v18h-1zM1404 871h1v18h-1zM300 891h1v18h-1zM452 891h1v18h-1zM504 891h1v18h-1zM603 891h1v18h-1zM701 891h1v18h-1zM999 891h1v18h-1zM1083 891h1v18h-1zM1141 891h1v18h-1zM1207 891h1v18h-1zM1231 891h1v18h-1zM1290 891h1v18h-1zM1370 891h1v18h-1zM1405 891h1v18h-1zM302 911h1v18h-1zM453 911h1v18h-1zM506 911h1v18h-1zM551 911h1v18h-1zM615 911h1v18h-1zM703 911h1v18h-1zM1000 911h1v18h-1zM1091 911h1v18h-1zM1143 911h1v18h-1zM1209 911h1v18h-1zM1239 911h1v18h-1zM1292 911h1v18h-1zM1372 911h1v18h-1zM303 931h1v18h-1zM507 931h1v18h-1zM552 931h1v18h-1zM616 931h1v18h-1zM1002 931h1v18h-1zM1093 931h1v18h-1zM1144 931h1v18h-1zM1210 931h1v18h-1zM1316 931h1v18h-1zM1407 931h1v18h-1zM305 951h1v18h-1zM355 951h1v18h-1zM456 951h1v18h-1zM509 951h1v18h-1zM558 951h1v18h-1zM1003 951h1v18h-1zM1099 951h1v18h-1zM1212 951h1v18h-1zM1246 951h1v18h-1zM1412 951h1v18h-1zM306 971h1v18h-1zM458 971h1v18h-1zM510 971h1v18h-1zM559 971h1v18h-1zM619 971h1v18h-1zM1005 971h1v18h-1zM1100 971h1v18h-1zM1213 971h1v18h-1zM1319 971h1v18h-1zM1413 971h1v18h-1zM308 991h1v18h-1zM459 991h1v18h-1zM513 991h1v18h-1zM561 991h1v18h-1zM631 991h1v18h-1zM1006 991h1v18h-1zM1215 991h1v18h-1zM309 1011h1v18h-1zM460 1011h1v18h-1zM515 1011h1v18h-1zM562 1011h1v18h-1zM632 1011h1v18h-1zM1008 1011h1v18h-1zM1103 1011h1v18h-1zM1216 1011h1v18h-1zM1324 1011h1v18h-1zM311 1031h1v18h-1zM462 1031h1v18h-1zM516 1031h1v18h-1zM564 1031h1v18h-1zM1009 1031h1v18h-1zM1106 1031h1v18h-1zM1217 1031h1v18h-1z" fill="#8a1a9e"/><g font-size="12.3" fill="#000" letter-spacing="-0.75"><text x="268.6" y="443.8">1045</text><text x="438.6" y="443.8">1163</text><text x="469.6" y="443.8">1185</text><text x="501.6" y="443.8">1208</text><text x="596.6" y="443.8">1273</text><text x="678.0" y="443.8">1333</text><text x="742.6" y="443.8">1379</text><text x="1032.6" y="443.8">1427</text><text x="1093.0" y="443.8">1470</text><text x="1175.6" y="443.8">1529</text><text x="1233.6" y="443.8">1571</text><text x="1294.6" y="443.8">1613</text><text x="1374.6" y="443.8">1671</text><text x="1449.6" y="443.8">1724</text><text x="270.6" y="463.8">1046</text><text x="420.6" y="463.8">1152</text><text x="488.6" y="463.8">1198</text><text x="535.6" y="463.8">1231</text><text x="605.6" y="463.8">1279</text><text x="680.6" y="463.8">1336</text><text x="743.6" y="463.8">1380</text><text x="1243.6" y="463.8">1578</text><text x="1296.6" y="463.8">1614</text><text x="1343.6" y="463.8">1650</text><text x="1386.6" y="463.8">1680</text><text x="272.6" y="483.8">1047</text><text x="431.6" y="483.8">1158</text><text x="467.6" y="483.8">1184</text><text x="540.6" y="483.8">1235</text><text x="607.6" y="483.8">1280</text><text x="682.6" y="483.8">1335</text><text x="752.6" y="483.8">1386</text><text x="1297.6" y="483.8">1615</text><text x="1345.6" y="483.8">1651</text><text x="1376.6" y="483.8">1672</text><text x="1451.6" y="483.8">1726</text><text x="273.6" y="503.8">1048</text><text x="349.6" y="503.8">1101</text><text x="441.6" y="503.8">1165</text><text x="470.6" y="503.8">1186</text><text x="544.6" y="503.8">1238</text><text x="608.6" y="503.8">1281</text><text x="748.6" y="503.8">1383</text><text x="1260.6" y="503.8">1590</text><text x="1299.0" y="503.8">1616</text><text x="1377.6" y="503.8">1673</text><text x="1453.6" y="503.8">1727</text><text x="275.6" y="523.8">1049</text><text x="350.6" y="523.8">1102</text><text x="472.6" y="523.8">1187</text><text x="501.6" y="523.8">1207</text><text x="610.6" y="523.8">1282</text><text x="645.6" y="523.8">1308</text><text x="677.6" y="523.8">1332</text><text x="746.6" y="523.8">1382</text><text x="1300.6" y="523.8">1617</text><text x="1339.6" y="523.8">1645</text><text x="1383.6" y="523.8">1678</text><text x="276.6" y="543.8">1050</text><text x="434.6" y="543.8">1160</text><text x="473.6" y="543.8">1188</text><text x="555.6" y="543.8">1245</text><text x="612.0" y="543.8">1284</text><text x="749.6" y="543.8">1384</text><text x="1268.6" y="543.8">1595</text><text x="1301.0" y="543.8">1618</text><text x="1348.6" y="543.8">1653</text><text x="1378.6" y="543.8">1675</text><text x="1454.6" y="543.8">1728</text><text x="278.6" y="563.8">1051</text><text x="437.6" y="563.8">1162</text><text x="475.6" y="563.8">1189</text><text x="546.6" y="563.8">1239</text><text x="586.6" y="563.8">1266</text><text x="640.0" y="563.8">1305</text><text x="1273.6" y="563.8">1599</text><text x="1321.0" y="563.8">1633</text><text x="1381.6" y="563.8">1677</text><text x="1443.6" y="563.8">1720</text><text x="279.6" y="583.8">1052</text><text x="426.6" y="583.8">1156</text><text x="476.6" y="583.8">1190</text><text x="527.6" y="583.8">1226</text><text x="556.6" y="583.8">1246</text><text x="611.6" y="583.8">1283</text><text x="671.0" y="583.8">1328</text><text x="1275.6" y="583.8">1600</text><text x="1307.6" y="583.8">1622</text><text x="1379.6" y="583.8">1674</text><text x="281.6" y="603.8">1053</text><text x="432.6" y="603.8">1159</text><text x="478.6" y="603.8">1191</text><text x="547.6" y="603.8">1240</text><text x="588.6" y="603.8">1267</text><text x="642.6" y="603.8">1306</text><text x="673.6" y="603.8">1329</text><text x="1276.6" y="603.8">1601</text><text x="1380.6" y="603.8">1676</text><text x="282.6" y="623.8">1054</text><text x="435.6" y="623.8">1161</text><text x="502.6" y="623.8">1209</text><text x="576.6" y="623.8">1259</text><text x="623.6" y="623.8">1293</text><text x="675.6" y="623.8">1330</text><text x="751.6" y="623.8">1385</text><text x="985.6" y="623.8">1395</text><text x="1086.6" y="623.8">1465</text><text x="1177.6" y="623.8">1532</text><text x="1230.6" y="623.8">1569</text><text x="1278.6" y="623.8">1602</text><text x="1308.6" y="623.8">1624</text><text x="1384.6" y="623.8">1679</text><text x="1444.6" y="623.8">1721</text><text x="282.6" y="643.8">1055</text><text x="419.6" y="643.8">1151</text><text x="485.6" y="643.8">1196</text><text x="530.6" y="643.8">1228</text><text x="574.6" y="643.8">1258</text><text x="621.6" y="643.8">1292</text><text x="676.6" y="643.8">1331</text><text x="978.6" y="643.8">1391</text><text x="1062.0" y="643.8">1447</text><text x="1095.6" y="643.8">1473</text><text x="1201.6" y="643.8">1549</text><text x="1262.6" y="643.8">1591</text><text x="1303.6" y="643.8">1619</text><text x="1338.0" y="643.8">1644</text><text x="1387.6" y="643.8">1681</text><text x="1446.6" y="643.8">1722</text><text x="284.6" y="663.8">1056</text><text x="429.6" y="663.8">1157</text><text x="504.6" y="663.8">1210</text><text x="538.6" y="663.8">1233</text><text x="611.6" y="663.8">1285</text><text x="680.6" y="663.8">1334</text><text x="980.6" y="663.8">1392</text><text x="1053.6" y="663.8">1441</text><text x="1098.6" y="663.8">1475</text><text x="1186.6" y="663.8">1537</text><text x="1235.6" y="663.8">1573</text><text x="1265.6" y="663.8">1593</text><text x="1304.6" y="663.8">1620</text><text x="1389.0" y="663.8">1682</text><text x="1447.6" y="663.8">1723</text><text x="285.6" y="683.8">1057</text><text x="417.6" y="683.8">1150</text><text x="487.6" y="683.8">1197</text><text x="532.6" y="683.8">1229</text><text x="577.6" y="683.8">1260</text><text x="613.6" y="683.8">1286</text><text x="681.6" y="683.8">1337</text><text x="981.6" y="683.8">1393</text><text x="1091.0" y="683.8">1469</text><text x="1202.6" y="683.8">1550</text><text x="1279.6" y="683.8">1603</text><text x="1309.0" y="683.8">1623</text><text x="1390.6" y="683.8">1683</text><text x="1450.6" y="683.8">1725</text><text x="288.6" y="703.8">1058</text><text x="439.6" y="703.8">1164</text><text x="482.6" y="703.8">1194</text><text x="549.6" y="703.8">1241</text><text x="589.6" y="703.8">1268</text><text x="643.6" y="703.8">1307</text><text x="740.6" y="703.8">1378</text><text x="986.6" y="703.8">1396</text><text x="1068.6" y="703.8">1453</text><text x="1184.0" y="703.8">1536</text><text x="1237.6" y="703.8">1574</text><text x="1266.6" y="703.8">1594</text><text x="1306.6" y="703.8">1621</text><text x="1392.6" y="703.8">1684</text><text x="288.6" y="723.8">1059</text><text x="353.6" y="723.8">1104</text><text x="484.6" y="723.8">1195</text><text x="536.6" y="723.8">1232</text><text x="591.6" y="723.8">1269</text><text x="745.6" y="723.8">1381</text><text x="1037.6" y="723.8">1430</text><text x="1074.6" y="723.8">1457</text><text x="1121.6" y="723.8">1490</text><text x="1186.6" y="723.8">1538</text><text x="1281.6" y="723.8">1604</text><text x="1310.6" y="723.8">1625</text><text x="1393.6" y="723.8">1685</text><text x="290.6" y="743.8">1060</text><text x="422.6" y="743.8">1153</text><text x="490.6" y="743.8">1199</text><text x="533.6" y="743.8">1230</text><text x="592.6" y="743.8">1270</text><text x="988.6" y="743.8">1397</text><text x="1069.6" y="743.8">1454</text><text x="1195.6" y="743.8">1544</text><text x="1254.6" y="743.8">1586</text><text x="1313.0" y="743.8">1626</text><text x="1394.6" y="743.8">1686</text><text x="291.6" y="763.8">1061</text><text x="491.6" y="763.8">1200</text><text x="539.6" y="763.8">1234</text><text x="594.6" y="763.8">1271</text><text x="989.6" y="763.8">1398</text><text x="1071.6" y="763.8">1455</text><text x="1197.6" y="763.8">1545</text><text x="1282.6" y="763.8">1605</text><text x="1313.6" y="763.8">1627</text><text x="1396.6" y="763.8">1687</text><text x="292.6" y="783.8">1062</text><text x="423.6" y="783.8">1154</text><text x="492.6" y="783.8">1201</text><text x="541.6" y="783.8">1236</text><text x="600.0" y="783.8">1272</text><text x="992.6" y="783.8">1399</text><text x="1078.6" y="783.8">1460</text><text x="1220.6" y="783.8">1562</text><text x="1314.6" y="783.8">1628</text><text x="1397.6" y="783.8">1688</text><text x="294.6" y="803.8">1063</text><text x="354.0" y="803.8">1105</text><text x="494.6" y="803.8">1202</text><text x="543.6" y="803.8">1237</text><text x="600.0" y="803.8">1274</text><text x="993.6" y="803.8">1400</text><text x="1065.6" y="803.8">1451</text><text x="1116.6" y="803.8">1487</text><text x="1198.6" y="803.8">1546</text><text x="1263.6" y="803.8">1592</text><text x="1316.0" y="803.8">1629</text><text x="295.6" y="823.8">1064</text><text x="495.6" y="823.8">1203</text><text x="550.6" y="823.8">1242</text><text x="599.6" y="823.8">1275</text><text x="995.6" y="823.8">1401</text><text x="1064.6" y="823.8">1450</text><text x="1106.6" y="823.8">1480</text><text x="1221.6" y="823.8">1563</text><text x="1285.6" y="823.8">1607</text><text x="297.6" y="843.8">1065</text><text x="497.6" y="843.8">1204</text><text x="557.6" y="843.8">1247</text><text x="613.0" y="843.8">1287</text><text x="995.6" y="843.8">1402</text><text x="1080.6" y="843.8">1461</text><text x="1204.6" y="843.8">1551</text><text x="1287.6" y="843.8">1608</text><text x="1342.6" y="843.8">1649</text><text x="298.6" y="863.8">1066</text><text x="498.6" y="863.8">1205</text><text x="601.6" y="863.8">1276</text><text x="997.6" y="863.8">1403</text><text x="1081.6" y="863.8">1462</text><text x="1288.6" y="863.8">1609</text><text x="1344.0" y="863.8">1648</text><text x="300.6" y="883.8">1067</text><text x="425.6" y="883.8">1155</text><text x="500.6" y="883.8">1206</text><text x="602.6" y="883.8">1277</text><text x="1000.0" y="883.8">1404</text><text x="1083.0" y="883.8">1463</text><text x="1207.6" y="883.8">1553</text><text x="1290.6" y="883.8">1610</text><text x="1341.0" y="883.8">1646</text><text x="301.6" y="903.8">1068</text><text x="505.6" y="903.8">1211</text><text x="604.6" y="903.8">1278</text><text x="1000.6" y="903.8">1405</text><text x="1084.6" y="903.8">1464</text><text x="1291.6" y="903.8">1611</text><text x="303.6" y="923.8">1069</text><text x="507.6" y="923.8">1212</text><text x="552.6" y="923.8">1243</text><text x="616.6" y="923.8">1288</text><text x="1001.6" y="923.8">1406</text><text x="1092.6" y="923.8">1471</text><text x="1293.6" y="923.8">1612</text><text x="1373.6" y="923.8">1670</text><text x="304.6" y="943.8">1070</text><text x="508.6" y="943.8">1213</text><text x="553.6" y="943.8">1244</text><text x="617.6" y="943.8">1289</text><text x="1003.6" y="943.8">1407</text><text x="1094.6" y="943.8">1472</text><text x="1211.6" y="943.8">1556</text><text x="1317.6" y="943.8">1630</text><text x="306.6" y="963.8">1071</text><text x="356.6" y="963.8">1107</text><text x="510.6" y="963.8">1214</text><text x="559.6" y="963.8">1248</text><text x="618.0" y="963.8">1290</text><text x="1004.6" y="963.8">1408</text><text x="1100.6" y="963.8">1476</text><text x="1213.6" y="963.8">1557</text><text x="1319.0" y="963.8">1631</text><text x="307.6" y="983.8">1072</text><text x="511.6" y="983.8">1215</text><text x="560.6" y="983.8">1249</text><text x="620.6" y="983.8">1291</text><text x="1006.6" y="983.8">1409</text><text x="1101.6" y="983.8">1477</text><text x="1214.6" y="983.8">1558</text><text x="1320.6" y="983.8">1632</text><text x="309.6" y="1003.8">1073</text><text x="562.6" y="1003.8">1250</text><text x="1007.6" y="1003.8">1410</text><text x="1103.0" y="1003.8">1478</text><text x="1216.6" y="1003.8">1559</text><text x="1323.0" y="1003.8">1634</text><text x="310.6" y="1023.8">1074</text><text x="563.6" y="1023.8">1251</text><text x="1009.6" y="1023.8">1411</text><text x="1104.6" y="1023.8">1479</text><text x="1217.6" y="1023.8">1560</text><text x="312.6" y="1043.8">1075</text><text x="565.6" y="1043.8">1252</text><text x="1010.6" y="1043.8">1412</text><text x="1107.6" y="1043.8">1481</text><text x="1218.6" y="1043.8">1561</text></g><rect x="742" y="432" width="288" height="16" fill="none" stroke="#000" stroke-width="2"/></svg><line x1="997.5" y1="171" x2="997.5" y2="1048" stroke="#808080" stroke-width="1" /><rect x="265" y="1048" width="1252" height="2" fill="#c0c0c0" /><rect x="1504" y="411" width="13" height="637" fill="#f0f0f0" /><rect x="1504" y="412" width="12" height="187" fill="#ffffff" /><line x1="1503.5" y1="411" x2="1503.5" y2="1050" stroke="#c8c8c8" stroke-width="1" /><rect x="1516" y="411" width="2" height="639" fill="#c4c4c4" /><line x1="1504" y1="411.5" x2="1518" y2="411.5" stroke="#c4c4c4" stroke-width="1" /><line x1="1504" y1="425.5" x2="1516" y2="425.5" stroke="#c8c8c8" stroke-width="1" /><line x1="1504" y1="598.5" x2="1516" y2="598.5" stroke="#c8c8c8" stroke-width="1" /><line x1="1504" y1="1033.5" x2="1516" y2="1033.5" stroke="#c8c8c8" stroke-width="1" /><rect x="1504" y="1034" width="12" height="14" fill="#ffffff" /><path d="M1506.5 420 L1510 416.5 L1513.5 420 Z" fill="#555"/><path d="M1506.5 1039.5 L1510 1043 L1513.5 1039.5 Z" fill="#555"/><rect x="265" y="1050" width="1238" height="13" fill="#f2f2f2" /><line x1="265" y1="1062.5" x2="1504" y2="1062.5" stroke="#c8c8c8" stroke-width="1" /><line x1="264.5" y1="1049" x2="264.5" y2="1063" stroke="#c8c8c8" stroke-width="1" /><rect x="265" y="1050" width="15" height="12" fill="#ffffff" /><line x1="279.5" y1="1050" x2="279.5" y2="1062" stroke="#c8c8c8" stroke-width="1" /><path d="M273 1052.5 L269.5 1056 L273 1059.5 Z" fill="#555"/><rect x="1433.5" y="1049.5" width="27" height="13" fill="#fff" stroke="#c8c8c8" stroke-width="1"/><rect x="1489.5" y="1049.5" width="14" height="13" fill="#fff" stroke="#c8c8c8" stroke-width="1"/><path d="M1494.5 1052.5 L1498 1056 L1494.5 1059.5 Z" fill="#555"/><text x="265" y="1077" font-size="12.65" font-weight="normal" fill="#000" >1379 DrawIndexedInstanced(969, 1, 0, 197161, 0)</text><text x="1096" y="1077" font-size="13.2" font-weight="normal" fill="#000" >Selection duration:-</text><text x="1354" y="1077" font-size="12.6" font-weight="normal" fill="#000" >4.201 ms</text><line x1="1536.5" y1="146" x2="1536.5" y2="1079" stroke="#c4c4c4" stroke-width="1" /><line x1="1536" y1="146.5" x2="1900" y2="146.5" stroke="#c4c4c4" stroke-width="1" /><line x1="1885.5" y1="147" x2="1885.5" y2="1079" stroke="#c8c8c8" stroke-width="1" /><rect x="1898" y="146" width="2" height="933" fill="#c4c4c4" /><line x1="1886" y1="161.5" x2="1898" y2="161.5" stroke="#c8c8c8" stroke-width="1" /><line x1="1886" y1="1064.5" x2="1898" y2="1064.5" stroke="#c8c8c8" stroke-width="1" /><path d="M1888.5 155.5 L1892 151.5 L1895.5 155.5 Z" fill="#555"/><path d="M1888.5 1070 L1892 1074 L1895.5 1070 Z" fill="#555"/><text transform="translate(1905,146) rotate(90)" font-size="11.5" font-weight="bold" fill="#000">Hide details</text><text x="1546" y="170" font-size="12.94" font-weight="bold" fill="#000" >1379 DrawIndexedInstanced(969, 1, 0, 197161, 0)</text><text x="1546" y="187" font-size="13" font-weight="normal" fill="#000" >Launched from Direct queue</text><text x="1546" y="213" font-size="13" font-weight="normal" fill="#000" >Start time</text><text x="1674" y="213" font-size="12.6" font-weight="normal" fill="#000" >4.187 ms</text><text x="1546" y="230" font-size="13" font-weight="normal" fill="#000" >End time</text><text x="1674" y="230" font-size="12.6" font-weight="normal" fill="#000" >4.203 ms</text><text x="1546" y="247" font-size="13" font-weight="normal" fill="#000" >Duration</text><text x="1674" y="247" font-size="12.6" font-weight="normal" fill="#000" >0.017 ms</text><text x="1546" y="264" font-size="13" font-weight="normal" fill="#000" >Work duration</text><text x="1674" y="264" font-size="12.6" font-weight="normal" fill="#000" >0.014 ms</text><text x="1546" y="281" font-size="13" font-weight="normal" fill="#000" >Hardware context</text><text x="1674" y="281" font-size="12.6" font-weight="normal" fill="#000" >1</text><text x="1546" y="307" font-size="13" font-weight="bold" fill="#000" >API shader hashes</text><text x="1546" y="327.5" font-size="11.9" font-weight="normal" fill="#000" >VS: 0xCF5870DD65884549E4688EBD34FCEF40</text><rect x="1818.75" y="317.75" width="10.5" height="11" fill="none" stroke="#000" stroke-width="1.5"/><rect x="1821" y="315.5" width="6" height="3.5" fill="#000"/><text x="1546" y="351.5" font-size="11.9" font-weight="normal" fill="#000" >PS: 0xC9533F4F4B819BB29F0E849DE5099B01</text><rect x="1812.75" y="341.75" width="10.5" height="11" fill="none" stroke="#000" stroke-width="1.5"/><rect x="1815" y="339.5" width="6" height="3.5" fill="#000"/><text x="1546" y="381" font-size="13" font-weight="bold" fill="#000" >API PSO hash</text><text x="1546" y="401.5" font-size="11.9" font-weight="normal" fill="#000" >0x5239D8456CC8435A</text><rect x="1685.75" y="391.75" width="10.5" height="11" fill="none" stroke="#000" stroke-width="1.5"/><rect x="1688" y="389.5" width="6" height="3.5" fill="#000"/><text x="1546" y="435" font-size="13" font-weight="bold" fill="#000" >Driver internal pipeline hash</text><text x="1546" y="455.5" font-size="11.9" font-weight="normal" fill="#000" >0x2B9B50CBEDF46F425239D8456CC8435A</text><rect x="1800.75" y="445.75" width="10.5" height="11" fill="none" stroke="#000" stroke-width="1.5"/><rect x="1803" y="443.5" width="6" height="3.5" fill="#000"/><text x="1546" y="484.5" font-size="13" font-weight="bold" fill="#000" >Wavefronts</text><text x="1546" y="502" font-size="13" font-weight="normal" fill="#000" >RDNA wavefront distribution:</text><rect x="1546" y="505" width="250" height="15" fill="#005fb8" /><rect x="1546" y="529" width="17" height="17" fill="#d0343a" /><text x="1564" y="543" font-size="13" font-weight="normal" fill="#000" >SurfS wavefronts</text><text x="1693" y="543" font-size="12.6" font-weight="normal" fill="#000" >-</text><rect x="1546" y="546" width="17" height="17" fill="#7f00ff" /><text x="1564" y="560" font-size="13" font-weight="normal" fill="#000" >PrimS wavefronts</text><text x="1693" y="560" font-size="12.6" font-weight="normal" fill="#000" >8 (0.12%)</text><rect x="1546" y="563" width="17" height="17" fill="#005fb8" /><text x="1564" y="577" font-size="13" font-weight="normal" fill="#000" >PS wavefronts</text><text x="1693" y="577" font-size="12.6" font-weight="normal" fill="#000" >6,424 (99.88%)</text><rect x="1546" y="580" width="17" height="17" fill="#ffb400" /><text x="1564" y="594" font-size="13" font-weight="normal" fill="#000" >CS wavefronts</text><text x="1693" y="594" font-size="12.6" font-weight="normal" fill="#000" >-</text><text x="1564" y="611" font-size="13" font-weight="bold" fill="#000" >Total wavefronts</text><text x="1693" y="611" font-size="13" font-weight="bold" fill="#000" >6,432</text><text x="1564" y="628" font-size="13" font-weight="bold" fill="#000" >Total threads</text><text x="1693" y="628" font-size="13" font-weight="bold" fill="#000" >359,437</text><text x="1546" y="654" font-size="13" font-weight="bold" fill="#000" >RDNA shader stage timeline</text><rect x="1546" y="657" width="15" height="8" fill="#7f00ff" /><rect x="1598" y="667" width="241" height="8" fill="#005fb8" /><rect x="1546" y="697" width="325" height="19" fill="#ffffff" /><defs><linearGradient id="hg" x1="0" y1="0" x2="0" y2="1"><stop offset="0" stop-color="#ffffff"/><stop offset="1" stop-color="#f4f4f4"/></linearGradient></defs><rect x="1546" y="697" width="325" height="19" fill="url(#hg)" /><line x1="1546" y1="716.5" x2="1871" y2="716.5" stroke="#d0d0d0" stroke-width="1" /><line x1="1620.5" y1="697" x2="1620.5" y2="716" stroke="#e0e0e0" stroke-width="1" /><line x1="1671.5" y1="697" x2="1671.5" y2="716" stroke="#e0e0e0" stroke-width="1" /><line x1="1734.5" y1="697" x2="1734.5" y2="716" stroke="#e0e0e0" stroke-width="1" /><line x1="1770.5" y1="697" x2="1770.5" y2="716" stroke="#e0e0e0" stroke-width="1" /><text x="1548" y="712" font-size="11.5" font-weight="bold" fill="#000" >API Shader</text><text x="1623" y="712" font-size="11.5" font-weight="bold" fill="#000" >VGPR</text><text x="1674" y="712" font-size="11.5" font-weight="bold" fill="#000" >SGPR</text><text x="1737" y="712" font-size="11.5" font-weight="bold" fill="#000" >LDS</text><text x="1773" y="712" font-size="11.5" font-weight="bold" fill="#000" >Occupancy</text><text x="1548" y="732" font-size="11.7" font-weight="normal" fill="#000" >VS</text><text x="1623" y="732" font-size="11.7" font-weight="normal" fill="#000" >32 (36)</text><text x="1674" y="732" font-size="11.7" font-weight="normal" fill="#000" >64 (128)</text><text x="1737" y="732" font-size="11.7" font-weight="normal" fill="#000" >-</text><text x="1773" y="732" font-size="11.7" font-weight="normal" fill="#000" >16 / 16</text><rect x="1546" y="737" width="325" height="20" fill="#f0f0f0" /><text x="1548" y="752" font-size="11.7" font-weight="normal" fill="#000" >HS</text><text x="1623" y="752" font-size="11.7" font-weight="normal" fill="#000" >-</text><text x="1674" y="752" font-size="11.7" font-weight="normal" fill="#000" >-</text><text x="1737" y="752" font-size="11.7" font-weight="normal" fill="#000" >-</text><text x="1773" y="752" font-size="11.7" font-weight="normal" fill="#000" >-</text><text x="1548" y="772" font-size="11.7" font-weight="normal" fill="#000" >DS</text><text x="1623" y="772" font-size="11.7" font-weight="normal" fill="#000" >-</text><text x="1674" y="772" font-size="11.7" font-weight="normal" fill="#000" >-</text><text x="1737" y="772" font-size="11.7" font-weight="normal" fill="#000" >-</text><text x="1773" y="772" font-size="11.7" font-weight="normal" fill="#000" >-</text><rect x="1546" y="777" width="325" height="20" fill="#f0f0f0" /><text x="1548" y="792" font-size="11.7" font-weight="normal" fill="#000" >GS</text><text x="1623" y="792" font-size="11.7" font-weight="normal" fill="#000" >-</text><text x="1674" y="792" font-size="11.7" font-weight="normal" fill="#000" >-</text><text x="1737" y="792" font-size="11.7" font-weight="normal" fill="#000" >-</text><text x="1773" y="792" font-size="11.7" font-weight="normal" fill="#000" >-</text><text x="1548" y="812" font-size="11.7" font-weight="normal" fill="#000" >PS</text><text x="1623" y="812" font-size="11.7" font-weight="normal" fill="#000" >40 (48)</text><text x="1674" y="812" font-size="11.7" font-weight="normal" fill="#000" >102 (128)</text><text x="1737" y="812" font-size="11.7" font-weight="normal" fill="#000" >-</text><text x="1773" y="812" font-size="11.7" font-weight="normal" fill="#000" >16 / 16</text><rect x="1546" y="817" width="325" height="20" fill="#f0f0f0" /><text x="1548" y="832" font-size="11.7" font-weight="normal" fill="#000" >CS</text><text x="1623" y="832" font-size="11.7" font-weight="normal" fill="#000" >-</text><text x="1674" y="832" font-size="11.7" font-weight="normal" fill="#000" >-</text><text x="1737" y="832" font-size="11.7" font-weight="normal" fill="#000" >-</text><text x="1773" y="832" font-size="11.7" font-weight="normal" fill="#000" >-</text><text x="1548" y="852" font-size="11.7" font-weight="normal" fill="#000" >RT</text><text x="1623" y="852" font-size="11.7" font-weight="normal" fill="#000" >-</text><text x="1674" y="852" font-size="11.7" font-weight="normal" fill="#000" >-</text><text x="1737" y="852" font-size="11.7" font-weight="normal" fill="#000" >-</text><text x="1773" y="852" font-size="11.7" font-weight="normal" fill="#000" >-</text><text x="1546" y="879.5" font-size="13" font-weight="bold" fill="#000" >Workload</text><text x="1546" y="897" font-size="13" font-weight="normal" fill="#000" >Shader stages</text><rect x="1546" y="900" width="30" height="30" fill="#128a3c" /><text x="1561" y="920" font-size="12" font-weight="normal" fill="#fff" text-anchor="middle">VS</text><rect x="1583" y="900" width="30" height="30" fill="#e1e1e1" /><text x="1598" y="920" font-size="12" font-weight="normal" fill="#000" text-anchor="middle">HS</text><rect x="1620" y="900" width="30" height="30" fill="#e1e1e1" /><text x="1635" y="920" font-size="12" font-weight="normal" fill="#000" text-anchor="middle">DS</text><rect x="1657" y="900" width="30" height="30" fill="#e1e1e1" /><text x="1672" y="920" font-size="12" font-weight="normal" fill="#000" text-anchor="middle">GS</text><rect x="1694" y="900" width="30" height="30" fill="#005fb8" /><text x="1709" y="920" font-size="12" font-weight="normal" fill="#fff" text-anchor="middle">PS</text><rect x="1738" y="900" width="30" height="30" fill="#e1e1e1" /><text x="1753" y="920" font-size="12" font-weight="normal" fill="#000" text-anchor="middle">CS</text><rect x="1775" y="900" width="30" height="30" fill="#e1e1e1" /><text x="1790" y="920" font-size="12" font-weight="normal" fill="#000" text-anchor="middle">RT</text><text x="1546" y="943.5" font-size="13" font-weight="normal" fill="#000" >Input primitives</text><text x="1725" y="943.5" font-size="12.6" font-weight="normal" fill="#000" >323</text><text x="1546" y="960.5" font-size="13" font-weight="normal" fill="#000" >Shaded vertices</text><text x="1725" y="960.5" font-size="12.6" font-weight="normal" fill="#000" >N/A</text><text x="1546" y="977.5" font-size="13" font-weight="normal" fill="#000" >Shaded control points</text><text x="1725" y="977.5" font-size="12.6" font-weight="normal" fill="#000" >-</text><text x="1546" y="994.5" font-size="13" font-weight="normal" fill="#000" >Tessellated vertices</text><text x="1725" y="994.5" font-size="12.6" font-weight="normal" fill="#000" >-</text><text x="1546" y="1011.5" font-size="13" font-weight="normal" fill="#000" >Shaded primitives</text><text x="1725" y="1011.5" font-size="12.6" font-weight="normal" fill="#000" >-</text><text x="1546" y="1028.5" font-size="13" font-weight="normal" fill="#000" >Shaded expanded vertices</text><text x="1725" y="1028.5" font-size="12.6" font-weight="normal" fill="#000" >N/A</text><text x="1546" y="1045.5" font-size="13" font-weight="normal" fill="#000" >Shaded pixels</text><text x="1725" y="1045.5" font-size="12.6" font-weight="normal" fill="#000" >359,429</text><defs><filter id="sh" x="-5%" y="-5%" width="115%" height="115%"><feGaussianBlur stdDeviation="1.6"/></filter></defs><rect x="897" y="440" width="341" height="179" fill="#000" opacity="0.45" filter="url(#sh)"/><rect x="895" y="438" width="340" height="178" fill="#fdfdfd" /><rect x="900.5" y="587.5" width="329" height="23" fill="#c6e1fb" stroke="#7da2ce" stroke-width="1"/><text x="928" y="460" font-size="12" font-weight="normal" fill="#000" >Zoom to selection</text><text x="928" y="484" font-size="12" font-weight="normal" fill="#000" >View in Overview</text><text x="928" y="508" font-size="12" font-weight="normal" fill="#000" >View in Event timing</text><text x="928" y="532" font-size="12" font-weight="normal" fill="#9a9a9a" >View in Instruction timing [Detailed data unavailable]</text><text x="928" y="556" font-size="12" font-weight="normal" fill="#000" >View in Pipeline state</text><text x="928" y="580" font-size="12" font-weight="normal" fill="#000" >Analyze pipeline in Radeon GPU Analyzer</text><text x="928" y="604" font-size="12" font-weight="normal" fill="#000" >Select RenderDoc event</text><path d="M1219 475.5 L1223 479.5 L1219 483.5 Z" fill="#333"/>
</svg></body></html>
